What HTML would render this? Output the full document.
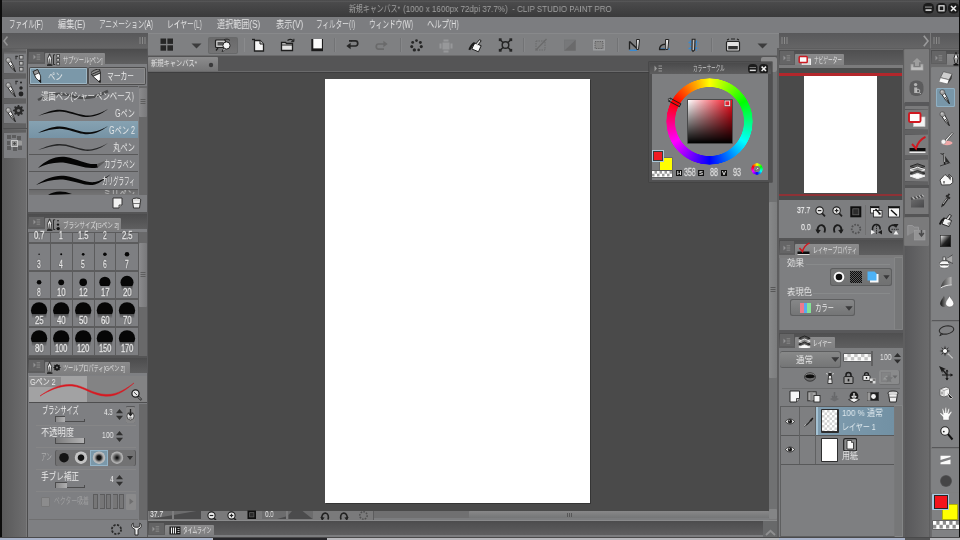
<!DOCTYPE html>
<html lang="ja"><head><meta charset="utf-8"><title>CLIP STUDIO PAINT PRO</title>
<style>
html,body{margin:0;padding:0;background:#4a4a4a;overflow:hidden}
#app{position:relative;width:960px;height:540px;overflow:hidden;background:#4a4a4a;font-family:"Liberation Sans","Noto Sans CJK JP",sans-serif}
#app div,#app svg,#app span.t{position:absolute;display:block}
#app span.t{white-space:nowrap;transform-origin:0 0}
#app span.t{opacity:.92;will-change:transform}
</style></head><body><div id="app">
<div style="left:0px;top:0px;width:960px;height:17px;background:linear-gradient(to bottom,#4d4d4e,#3a3a3b);"></div>
<div style="left:0px;top:1px;width:960px;height:1px;background:#555556;"></div>
<span class="t" style="left:349px;top:3px;font-size:9.5px;line-height:11.5px;color:#a9a9a9;transform:scaleX(0.729);">新規キャンバス*</span>
<span class="t" style="left:403px;top:3px;font-size:9.5px;line-height:11.5px;color:#a9a9a9;transform:scaleX(0.843);">(1000 x 1600px 72dpi 37.7%)&nbsp; - CLIP STUDIO PAINT PRO</span>
<svg style="left:923px;top:3px;" width="11" height="11" viewBox="0 0 11 11"><rect x="0" y="0" width="11" height="10.5" rx="4.5" fill="#1c1c1c"/><rect x="2.5" y="6.3" width="6" height="1.6" fill="#ddd"/><rect x="2" y="3.5" width="7" height="1.2" fill="#888"/></svg>
<svg style="left:936px;top:3px;" width="11" height="11" viewBox="0 0 11 11"><rect x="0" y="0" width="11" height="10.5" rx="4.5" fill="#1c1c1c"/><rect x="3" y="2.8" width="5" height="5" fill="none" stroke="#ddd" stroke-width="1.3"/></svg>
<svg style="left:948px;top:3px;" width="11" height="11" viewBox="0 0 11 11"><rect x="0" y="0" width="11" height="10.5" rx="4.5" fill="#1c1c1c"/><path d="M3 3L8 8M8 3L3 8" stroke="#eee" stroke-width="1.5"/></svg>
<div style="left:0px;top:17px;width:960px;height:16px;background:#7c7d80;"></div>
<span class="t" style="left:9px;top:19px;font-size:10px;line-height:12px;color:#ececec;transform:scaleX(0.642);">ファイル(F)</span>
<span class="t" style="left:58px;top:19px;font-size:10px;line-height:12px;color:#ececec;transform:scaleX(0.818);">編集(E)</span>
<span class="t" style="left:99px;top:19px;font-size:10px;line-height:12px;color:#ececec;transform:scaleX(0.651);">アニメーション(A)</span>
<span class="t" style="left:167px;top:19px;font-size:10px;line-height:12px;color:#ececec;transform:scaleX(0.673);">レイヤー(L)</span>
<span class="t" style="left:217px;top:19px;font-size:10px;line-height:12px;color:#ececec;transform:scaleX(0.811);">選択範囲(S)</span>
<span class="t" style="left:276px;top:19px;font-size:10px;line-height:12px;color:#ececec;transform:scaleX(0.818);">表示(V)</span>
<span class="t" style="left:316px;top:19px;font-size:10px;line-height:12px;color:#ececec;transform:scaleX(0.661);">フィルター(I)</span>
<span class="t" style="left:369px;top:19px;font-size:10px;line-height:12px;color:#ececec;transform:scaleX(0.667);">ウィンドウ(W)</span>
<span class="t" style="left:427px;top:19px;font-size:10px;line-height:12px;color:#ececec;transform:scaleX(0.727);">ヘルプ(H)</span>
<div style="left:0px;top:33px;width:148px;height:15px;background:linear-gradient(to bottom,#58585a,#656566);"></div>
<svg style="left:3px;top:36px;" width="5" height="10" viewBox="0 0 5 10"><path d="M4.5 0.5L1 5L4.5 9.5" fill="none" stroke="#929293" stroke-width="1.6"/></svg>
<svg style="left:139px;top:37px;" width="7" height="7" viewBox="0 0 7 7"><path d="M1 0V7M3.5 0V7M6 0V7" stroke="#8a8a8a" stroke-width="1"/></svg>
<div style="left:777px;top:33px;width:183px;height:15px;background:linear-gradient(to bottom,#58585a,#656566);"></div>
<div style="left:0px;top:48px;width:148px;height:492px;background:#5e5e5f;"></div>
<div style="left:1.5px;top:49px;width:24.5px;height:488px;background:linear-gradient(to right,#59595a,#6d6d6e);"></div>
<div style="left:26px;top:49px;width:1.3px;height:488px;background:#7a7a7b;"></div>
<div style="left:27.3px;top:49px;width:1.2px;height:488px;background:#4c4c4d;"></div>
<div style="left:28px;top:49px;width:120px;height:488px;background:#6c6c6d;"></div>
<div style="left:4px;top:51px;width:21.5px;height:2.5px;background:linear-gradient(to bottom,#58585a,#747475);"></div>
<div style="left:4px;top:54px;width:22px;height:19px;background:#7e7f82;"></div>
<svg style="left:5.3px;top:57px;" width="12" height="16" viewBox="0 0 12 16"><path d="M2.6 5.2L5.6 3.6L8.6 9.4L10.4 14.8L6.6 11Z" fill="#f6f6f6" stroke="#1c1c1c" stroke-width="0.9" stroke-linejoin="round"/><path d="M6.4 8L10 14.2" stroke="#1c1c1c" stroke-width="0.9"/><circle cx="3.4" cy="3.2" r="2.5" fill="#a2a2a2" stroke="#4a4a4a" stroke-width="0.7"/><circle cx="2.8" cy="2.6" r="1" fill="#c8c8c8"/></svg>
<svg style="left:15px;top:55px;" width="9" height="17" viewBox="0 0 9 17"><rect x="0.5" y="0.8" width="1" height="3.6" fill="#2a2a2a"/><rect x="0.5" y="0.8" width="2.6" height="1" fill="#2a2a2a"/><rect x="4.5" y="0.5" width="3.5" height="3.5" fill="#bbb" stroke="#444" stroke-width="0.8"/><rect x="4.5" y="6.5" width="3.5" height="3.5" fill="#bbb" stroke="#444" stroke-width="0.8"/><rect x="4.5" y="12.5" width="3.5" height="3.5" fill="#bbb" stroke="#444" stroke-width="0.8"/></svg>
<div style="left:4px;top:74px;width:22px;height:4px;background:#616162;"></div>
<div style="left:4px;top:79px;width:22px;height:19px;background:#7e7f82;"></div>
<svg style="left:5.3px;top:82px;" width="12" height="16" viewBox="0 0 12 16"><path d="M2.6 5.2L5.6 3.6L8.6 9.4L10.4 14.8L6.6 11Z" fill="#f6f6f6" stroke="#1c1c1c" stroke-width="0.9" stroke-linejoin="round"/><path d="M6.4 8L10 14.2" stroke="#1c1c1c" stroke-width="0.9"/><circle cx="3.4" cy="3.2" r="2.5" fill="#a2a2a2" stroke="#4a4a4a" stroke-width="0.7"/><circle cx="2.8" cy="2.6" r="1" fill="#c8c8c8"/></svg>
<svg style="left:15px;top:80px;" width="9" height="17" viewBox="0 0 9 17"><rect x="0.5" y="0.8" width="1" height="3.6" fill="#2a2a2a"/><rect x="0.5" y="0.8" width="2.6" height="1" fill="#2a2a2a"/><circle cx="6" cy="2.5" r="1" fill="#222"/><circle cx="6" cy="8" r="1.7" fill="#222"/><circle cx="6" cy="14" r="2.4" fill="#222"/></svg>
<div style="left:4px;top:99px;width:22px;height:4px;background:#616162;"></div>
<div style="left:4px;top:104px;width:22px;height:19px;background:#7e7f82;"></div>
<svg style="left:5.3px;top:107px;" width="12" height="16" viewBox="0 0 12 16"><path d="M2.6 5.2L5.6 3.6L8.6 9.4L10.4 14.8L6.6 11Z" fill="#f6f6f6" stroke="#1c1c1c" stroke-width="0.9" stroke-linejoin="round"/><path d="M6.4 8L10 14.2" stroke="#1c1c1c" stroke-width="0.9"/><circle cx="3.4" cy="3.2" r="2.5" fill="#a2a2a2" stroke="#4a4a4a" stroke-width="0.7"/><circle cx="2.8" cy="2.6" r="1" fill="#c8c8c8"/></svg>
<svg style="left:13px;top:105px;" width="11" height="11" viewBox="0 0 11 11"><circle cx="5.5" cy="5.5" r="3" fill="none" stroke="#2a2a2a" stroke-width="2.4"/><path d="M5.5 0V11M0 5.5H11M1.6 1.6L9.4 9.4M9.4 1.6L1.6 9.4" stroke="#2a2a2a" stroke-width="1.6"/><circle cx="5.5" cy="5.5" r="1.6" fill="#7b7b7c"/></svg>
<div style="left:4px;top:124px;width:22px;height:4px;background:#616162;"></div>
<div style="left:3px;top:128px;width:24px;height:1px;background:#505051;"></div>
<div style="left:4px;top:130px;width:22px;height:2px;background:#5f5f60;"></div>
<div style="left:4px;top:133px;width:22px;height:24.7px;background:#7e7f82;"></div>
<svg style="left:7px;top:135px;" width="16" height="16" viewBox="0 0 16 16"><g fill="#5c5c5d"><rect x="0" y="0" width="4" height="4"/><rect x="5" y="0" width="4" height="3"/><rect x="10" y="1" width="4" height="4"/><rect x="0" y="6" width="3" height="4"/><rect x="0" y="11" width="4" height="4"/><rect x="6" y="12" width="4" height="4"/><rect x="11" y="11" width="4" height="4"/></g><rect x="11" y="6" width="4" height="4" fill="#9a9a9a"/><rect x="4.5" y="5.5" width="6" height="6" fill="#8a8a8a" stroke="#c8c8c8" stroke-width="1"/><path d="M7.5 7V10M6 8.5H9" stroke="#444" stroke-width="0.8"/></svg>
<div style="left:28px;top:64px;width:120px;height:131px;background:#7e7f82;"></div>
<div style="left:28px;top:49px;width:120px;height:15px;background:linear-gradient(to bottom,#4c4c4d,#5f5f60);"></div>
<div style="left:28.5px;top:51.5px;width:15px;height:10.5px;background:#646465;"></div>
<svg style="left:32.5px;top:53.5px;" width="8" height="7" viewBox="0 0 8 7"><path d="M0.5 0.5L2.8 3L0.5 5.5Z" fill="#949495"/><path d="M3.6 0.8H7.2M3.6 3H7.2M3.6 5.2H7.2" stroke="#8e8e8f" stroke-width="0.9"/></svg>
<div style="left:44.5px;top:53px;width:60.5px;height:13px;background:linear-gradient(to bottom,#8a8a8b,#7d7d7e);border-radius:1px 1px 0 0"></div>
<svg style="left:47px;top:52.8px;" width="6" height="13" viewBox="0 0 6 13"><path d="M2.6 0.8L4.6 5.5L3.8 11.4H1.4L0.6 5.5Z" fill="#f2f2f2" stroke="#1c1c1c" stroke-width="0.8"/><path d="M2.6 5.5V11" stroke="#1c1c1c" stroke-width="0.7"/><path d="M1.6 2.6H3.6" stroke="#555" stroke-width="0.7"/><rect x="0" y="11.5" width="5.4" height="1.2" fill="#0c0c0c"/></svg>
<svg style="left:53px;top:53.5px;" width="8" height="12" viewBox="0 0 8 12"><path d="M0.5 10.5V0.8H2.2M0.5 10.5H2.2" stroke="#262626" stroke-width="0.9" fill="none"/><g fill="#c8c8c8" stroke="#303030" stroke-width="0.7"><rect x="3.8" y="0.6" width="2.6" height="2.6"/><rect x="3.8" y="4.5" width="2.6" height="2.6"/><rect x="3.8" y="8.4" width="2.6" height="2.6"/></g></svg>
<span class="t" style="left:62.5px;top:55.5px;font-size:7.5px;line-height:9.5px;color:#e6e6e6;transform:scaleX(0.702);">サブツール[ペン]</span>
<div style="left:28.5px;top:67px;width:59px;height:18px;background:#4e4e4f;border-radius:2px"></div>
<div style="left:29.5px;top:68px;width:57px;height:16px;background:#7b98a9;box-shadow:inset 0 0 0 1px #9db6c4;border-radius:1px"></div>
<div style="left:87.5px;top:67px;width:58.5px;height:18px;background:#4e4e4f;border-radius:2px"></div>
<div style="left:88.5px;top:68px;width:56.5px;height:16px;background:#7e7f82;box-shadow:inset 0 0 0 1px #8c8c8d;border-radius:1px"></div>
<svg style="left:32px;top:69px;" width="12" height="15" viewBox="0 0 12 15"><g transform="rotate(-24 6 7.5)"><path d="M3.6 1H8.4L8.6 8L6 14L3.4 8Z" fill="#fbfbfb" stroke="#222" stroke-width="0.8"/><path d="M3.6 1H8.4L8.5 4.6H3.5Z" fill="#9a9a9a" stroke="#222" stroke-width="0.7"/><path d="M5.2 11.6L6 14L6.8 11.6Z" fill="#111" stroke="#111" stroke-width="0.8"/></g></svg>
<svg style="left:90.5px;top:69px;" width="13" height="15" viewBox="0 0 13 15"><g transform="rotate(-24 6.5 7.5)"><path d="M1.6 1.5C4 0.2 9 0.2 11.4 1.5L10.6 5.5H2.4Z" fill="#8a8a8a" stroke="#222" stroke-width="0.8"/><path d="M2 3.2H11" stroke="#222" stroke-width="0.8"/><path d="M2.4 5.5H10.6L7.4 12.6H5.6Z" fill="#fbfbfb" stroke="#222" stroke-width="0.8"/><path d="M5.6 12.4H7.4L6.5 14.2Z" fill="#111" stroke="#111" stroke-width="0.7"/></g></svg>
<span class="t" style="left:48px;top:70.5px;font-size:10px;line-height:12px;color:#efefef;transform:scaleX(0.725);">ペン</span>
<span class="t" style="left:107px;top:70.5px;font-size:10px;line-height:12px;color:#efefef;transform:scaleX(0.675);">マーカー</span>
<div style="left:28.5px;top:86px;width:109.5px;height:109px;background:#585859;"></div>
<div style="left:29px;top:87px;width:108.5px;height:16.5px;background:#7e7f82;"></div>
<div style="left:29px;top:104px;width:108.5px;height:16.5px;background:#7e7f82;"></div>
<div style="left:29px;top:121px;width:108.5px;height:16.5px;background:linear-gradient(to bottom,#86a2b2,#7693a5);"></div>
<div style="left:29px;top:138px;width:108.5px;height:16px;background:#7e7f82;"></div>
<div style="left:29px;top:155px;width:108.5px;height:16px;background:#7e7f82;"></div>
<div style="left:29px;top:172px;width:108.5px;height:16.5px;background:#7e7f82;"></div>
<div style="left:29px;top:189.5px;width:108.5px;height:5.5px;background:linear-gradient(to bottom,#6a6a6b,#747475);"></div>
<svg style="left:28px;top:86px;" width="110" height="110" viewBox="0 0 110 110"><g transform="translate(-28,-86)"><path d="M38 100 C50 93 62 93 72 96 C84 100 95 98 108 91" stroke="#2a2a2a" stroke-width="2.6" fill="none" opacity="0.6"/><path d="M38 116 C48 111.4 56 108.4 66 110.4 C78 113.4 84 116.4 92 115.14 C99 114 104 111 108 109 C104 112 99 115.36 92 116.56 C84 118.19999999999999 78 115.1 66 112.19999999999999 C56 110.19999999999999 48 113.19999999999999 38 116Z" fill="#0a0a0a"/><path d="M38 133 C48 128.2 56 125.2 66 127.2 C78 130.2 84 133.2 92 132.02 C99 131 104 128 108 126 C104 129 99 132.48 92 133.67999999999998 C84 135.4 78 132.3 66 129.4 C56 127.39999999999999 48 130.4 38 133Z" fill="#0a0a0a"/><g opacity="0.75"><path d="M38 150 C48 145.55 56 142.55 66 144.55 C78 147.55 84 150.55 92 149.23 C99 148 104 145 108 143 C104 146 99 149.27 92 150.47 C84 152.04999999999998 78 148.95 66 146.04999999999998 C56 144.04999999999998 48 147.04999999999998 38 150Z" fill="#0a0a0a"/></g><path d="M38 168 C46 160 56 155.5 66 157 C78 159 86 165 97 164 L98 167.5 C86 169.5 78 165 66 163 C56 161.5 46 164 38 168Z" fill="#050505"/><path d="M97 164 L107 160 L98 167.5Z" fill="#5a5a5b"/><path d="M36 185 C46 178 56 174.5 66 176 C78 178 86 183 95 182 C100 181 105 178 111 174 C105 179 100 183 95 184.5 C86 186.5 78 182 66 180 C56 178.5 46 181 36 185Z" fill="#050505"/><path d="M48 195 C54 191 62 190 72 194Z" fill="#050505"/></g></svg>
<span class="t" style="left:41px;top:90.5px;font-size:10px;line-height:12px;color:#efefef;transform:scaleX(0.738);">漫画ペン(シャーペンベース)</span>
<span class="t" style="left:115px;top:107.5px;font-size:10px;line-height:12px;color:#efefef;transform:scaleX(0.714);">Gペン</span>
<span class="t" style="left:109px;top:124.5px;font-size:10px;line-height:12px;color:#efefef;transform:scaleX(0.722);">Gペン 2</span>
<span class="t" style="left:113px;top:141.5px;font-size:10px;line-height:12px;color:#efefef;transform:scaleX(0.733);">丸ペン</span>
<span class="t" style="left:104px;top:158.5px;font-size:10px;line-height:12px;color:#efefef;transform:scaleX(0.620);">カブラペン</span>
<span class="t" style="left:102px;top:175.5px;font-size:10px;line-height:12px;color:#efefef;transform:scaleX(0.550);">カリグラフィ</span>
<span class="t" style="left:103px;top:189px;font-size:9px;line-height:11px;color:#d0d0d0;transform:scaleX(0.889);clip-path:inset(0 0 6px 0)">ミリペン</span>
<div style="left:138.5px;top:86px;width:8.5px;height:109px;background:#69696a;"></div>
<div style="left:139px;top:87.5px;width:7.5px;height:29.5px;background:linear-gradient(to right,#8b8b8d,#79797b);border-radius:1px"></div>
<svg style="left:140px;top:99px;" width="6" height="6" viewBox="0 0 6 6"><path d="M0.5 0.5H5.5M0.5 2.5H5.5M0.5 4.5H5.5" stroke="#555" stroke-width="0.8"/></svg>
<div style="left:28px;top:195px;width:120px;height:17px;background:#7e7f82;"></div>
<svg style="left:112px;top:197px;" width="11" height="12" viewBox="0 0 11 12"><path d="M1 1H10V8L7 11H1Z" fill="#f2f2f2" stroke="#333" stroke-width="1"/><path d="M10 8H7V11" fill="#bbb" stroke="#333" stroke-width="0.8"/></svg>
<svg style="left:131px;top:197px;" width="11" height="12" viewBox="0 0 11 12"><ellipse cx="5.5" cy="3" rx="4.5" ry="2" fill="#ddd" stroke="#333" stroke-width="1"/><path d="M1.5 4L2.5 11H8.5L9.5 4" fill="#eee" stroke="#333" stroke-width="1"/><path d="M2 6.5H9" stroke="#555" stroke-width="0.8"/></svg>
<div style="left:28px;top:212px;width:120px;height:2px;background:#555556;"></div>
<div style="left:28px;top:229px;width:120px;height:127px;background:#7e7f82;"></div>
<div style="left:28px;top:214px;width:120px;height:15px;background:linear-gradient(to bottom,#4c4c4d,#5f5f60);"></div>
<div style="left:28.5px;top:216.5px;width:15px;height:10.5px;background:#646465;"></div>
<svg style="left:32.5px;top:218.5px;" width="8" height="7" viewBox="0 0 8 7"><path d="M0.5 0.5L2.8 3L0.5 5.5Z" fill="#949495"/><path d="M3.6 0.8H7.2M3.6 3H7.2M3.6 5.2H7.2" stroke="#8e8e8f" stroke-width="0.9"/></svg>
<div style="left:44.5px;top:218px;width:76px;height:13px;background:linear-gradient(to bottom,#8a8a8b,#7d7d7e);border-radius:1px 1px 0 0"></div>
<svg style="left:47px;top:217.8px;" width="6" height="13" viewBox="0 0 6 13"><path d="M2.6 0.8L4.6 5.5L3.8 11.4H1.4L0.6 5.5Z" fill="#f2f2f2" stroke="#1c1c1c" stroke-width="0.8"/><path d="M2.6 5.5V11" stroke="#1c1c1c" stroke-width="0.7"/><path d="M1.6 2.6H3.6" stroke="#555" stroke-width="0.7"/><rect x="0" y="11.5" width="5.4" height="1.2" fill="#0c0c0c"/></svg>
<svg style="left:53px;top:218.5px;" width="8" height="12" viewBox="0 0 8 12"><path d="M0.5 10.5V0.8H2.2M0.5 10.5H2.2" stroke="#262626" stroke-width="0.9" fill="none"/><circle cx="5" cy="1.8" r="0.8" fill="#151515"/><circle cx="5" cy="5.6" r="1.2" fill="#151515"/><circle cx="5.2" cy="9.6" r="1.7" fill="#151515"/></svg>
<span class="t" style="left:62.5px;top:220.5px;font-size:7.5px;line-height:9.5px;color:#e6e6e6;transform:scaleX(0.737);">ブラシサイズ[Gペン 2]</span>
<div style="left:28px;top:232px;width:110.5px;height:123.5px;background:#5c5c5d;"></div>
<div style="left:28.5px;top:232.5px;width:21.3px;height:9.5px;background:#7e7f82;"></div>
<div style="left:50.8px;top:232.5px;width:20.9px;height:9.5px;background:#7e7f82;"></div>
<div style="left:72.7px;top:232.5px;width:20.9px;height:9.5px;background:#7e7f82;"></div>
<div style="left:94.6px;top:232.5px;width:20.7px;height:9.5px;background:#7e7f82;"></div>
<div style="left:116.3px;top:232.5px;width:21.4px;height:9.5px;background:#7e7f82;"></div>
<div style="left:28.5px;top:244px;width:21.3px;height:26px;background:#7e7f82;"></div>
<div style="left:50.8px;top:244px;width:20.9px;height:26px;background:#7e7f82;"></div>
<div style="left:72.7px;top:244px;width:20.9px;height:26px;background:#7e7f82;"></div>
<div style="left:94.6px;top:244px;width:20.7px;height:26px;background:#7e7f82;"></div>
<div style="left:116.3px;top:244px;width:21.4px;height:26px;background:#7e7f82;"></div>
<div style="left:28.5px;top:272px;width:21.3px;height:26px;background:#7e7f82;"></div>
<div style="left:50.8px;top:272px;width:20.9px;height:26px;background:#7e7f82;"></div>
<div style="left:72.7px;top:272px;width:20.9px;height:26px;background:#7e7f82;"></div>
<div style="left:94.6px;top:272px;width:20.7px;height:26px;background:#7e7f82;"></div>
<div style="left:116.3px;top:272px;width:21.4px;height:26px;background:#7e7f82;"></div>
<div style="left:28.5px;top:300px;width:21.3px;height:26px;background:#7e7f82;"></div>
<div style="left:50.8px;top:300px;width:20.9px;height:26px;background:#7e7f82;"></div>
<div style="left:72.7px;top:300px;width:20.9px;height:26px;background:#7e7f82;"></div>
<div style="left:94.6px;top:300px;width:20.7px;height:26px;background:#7e7f82;"></div>
<div style="left:116.3px;top:300px;width:21.4px;height:26px;background:#7e7f82;"></div>
<div style="left:28.5px;top:328px;width:21.3px;height:26.5px;background:#7e7f82;"></div>
<div style="left:50.8px;top:328px;width:20.9px;height:26.5px;background:#7e7f82;"></div>
<div style="left:72.7px;top:328px;width:20.9px;height:26.5px;background:#7e7f82;"></div>
<div style="left:94.6px;top:328px;width:20.7px;height:26.5px;background:#7e7f82;"></div>
<div style="left:116.3px;top:328px;width:21.4px;height:26.5px;background:#7e7f82;"></div>
<svg style="left:28px;top:232px;" width="110" height="124" viewBox="0 0 110 124"><defs><clipPath id="bc0"><rect x="28" y="232.5" width="110" height="13.9"/></clipPath><clipPath id="bc1"><rect x="28" y="244" width="110" height="13.9"/></clipPath><clipPath id="bc2"><rect x="28" y="272" width="110" height="13.9"/></clipPath><clipPath id="bc3"><rect x="28" y="300" width="110" height="13.9"/></clipPath><clipPath id="bc4"><rect x="28" y="328" width="110" height="13.9"/></clipPath><linearGradient id="bsh" x1="0" y1="0" x2="0" y2="1"><stop offset="0" stop-color="#000" stop-opacity="0.42"/><stop offset="1" stop-color="#000" stop-opacity="0"/></linearGradient></defs><g transform="translate(-28,-232)"><circle cx="39.1" cy="254.3" r="0.7" fill="#060606" clip-path="url(#bc1)"/><circle cx="61.2" cy="254.3" r="1.0" fill="#060606" clip-path="url(#bc1)"/><circle cx="83.2" cy="254.3" r="1.35" fill="#060606" clip-path="url(#bc1)"/><circle cx="104.9" cy="254.3" r="1.8" fill="#060606" clip-path="url(#bc1)"/><circle cx="127.0" cy="254.3" r="2.25" fill="#060606" clip-path="url(#bc1)"/><circle cx="39.1" cy="282.3" r="2.3" fill="#060606" clip-path="url(#bc2)"/><circle cx="61.2" cy="282.3" r="2.9" fill="#060606" clip-path="url(#bc2)"/><circle cx="83.2" cy="282.3" r="3.8" fill="#060606" clip-path="url(#bc2)"/><circle cx="104.9" cy="282.3" r="5.6" fill="#060606" clip-path="url(#bc2)"/><circle cx="127.0" cy="282.3" r="6.5" fill="#060606" clip-path="url(#bc2)"/><rect x="121.5" y="285.9" width="11.0" height="4.5" fill="url(#bsh)"/><circle cx="39.1" cy="310.3" r="8.1" fill="#060606" clip-path="url(#bc3)"/><rect x="31.8" y="313.9" width="14.6" height="4.5" fill="url(#bsh)"/><circle cx="61.2" cy="310.3" r="8.1" fill="#060606" clip-path="url(#bc3)"/><rect x="53.9" y="313.9" width="14.6" height="4.5" fill="url(#bsh)"/><circle cx="83.2" cy="310.3" r="8.1" fill="#060606" clip-path="url(#bc3)"/><rect x="75.8" y="313.9" width="14.6" height="4.5" fill="url(#bsh)"/><circle cx="104.9" cy="310.3" r="8.1" fill="#060606" clip-path="url(#bc3)"/><rect x="97.6" y="313.9" width="14.6" height="4.5" fill="url(#bsh)"/><circle cx="127.0" cy="310.3" r="8.1" fill="#060606" clip-path="url(#bc3)"/><rect x="119.7" y="313.9" width="14.6" height="4.5" fill="url(#bsh)"/><circle cx="39.1" cy="338.3" r="8.1" fill="#060606" clip-path="url(#bc4)"/><rect x="31.8" y="341.9" width="14.6" height="4.5" fill="url(#bsh)"/><circle cx="61.2" cy="338.3" r="8.1" fill="#060606" clip-path="url(#bc4)"/><rect x="53.9" y="341.9" width="14.6" height="4.5" fill="url(#bsh)"/><circle cx="83.2" cy="338.3" r="8.1" fill="#060606" clip-path="url(#bc4)"/><rect x="75.8" y="341.9" width="14.6" height="4.5" fill="url(#bsh)"/><circle cx="104.9" cy="338.3" r="8.1" fill="#060606" clip-path="url(#bc4)"/><rect x="97.6" y="341.9" width="14.6" height="4.5" fill="url(#bsh)"/><circle cx="127.0" cy="338.3" r="8.1" fill="#060606" clip-path="url(#bc4)"/><rect x="119.7" y="341.9" width="14.6" height="4.5" fill="url(#bsh)"/></g></svg>
<span class="t" style="left:33.9px;top:229.5px;font-size:10px;line-height:12px;color:#f6f6f6;transform:scaleX(0.750);-webkit-text-stroke:0.35px #f0f0f0;text-shadow:0 0 1px #333,0 0 2px #444">0.7</span>
<span class="t" style="left:59.25px;top:229.5px;font-size:10px;line-height:12px;color:#f6f6f6;transform:scaleX(0.667);-webkit-text-stroke:0.35px #f0f0f0;text-shadow:0 0 1px #333,0 0 2px #444">1</span>
<span class="t" style="left:77.9px;top:229.5px;font-size:10px;line-height:12px;color:#f6f6f6;transform:scaleX(0.750);-webkit-text-stroke:0.35px #f0f0f0;text-shadow:0 0 1px #333,0 0 2px #444">1.5</span>
<span class="t" style="left:102.94999999999999px;top:229.5px;font-size:10px;line-height:12px;color:#f6f6f6;transform:scaleX(0.667);-webkit-text-stroke:0.35px #f0f0f0;text-shadow:0 0 1px #333,0 0 2px #444">2</span>
<span class="t" style="left:121.75px;top:229.5px;font-size:10px;line-height:12px;color:#f6f6f6;transform:scaleX(0.750);-webkit-text-stroke:0.35px #f0f0f0;text-shadow:0 0 1px #333,0 0 2px #444">2.5</span>
<span class="t" style="left:37.15px;top:259px;font-size:10px;line-height:12px;color:#f6f6f6;transform:scaleX(0.667);-webkit-text-stroke:0.35px #f0f0f0;text-shadow:0 0 1px #333,0 0 2px #444">3</span>
<span class="t" style="left:59.25px;top:259px;font-size:10px;line-height:12px;color:#f6f6f6;transform:scaleX(0.667);-webkit-text-stroke:0.35px #f0f0f0;text-shadow:0 0 1px #333,0 0 2px #444">4</span>
<span class="t" style="left:81.15px;top:259px;font-size:10px;line-height:12px;color:#f6f6f6;transform:scaleX(0.667);-webkit-text-stroke:0.35px #f0f0f0;text-shadow:0 0 1px #333,0 0 2px #444">5</span>
<span class="t" style="left:102.94999999999999px;top:259px;font-size:10px;line-height:12px;color:#f6f6f6;transform:scaleX(0.667);-webkit-text-stroke:0.35px #f0f0f0;text-shadow:0 0 1px #333,0 0 2px #444">6</span>
<span class="t" style="left:125.0px;top:259px;font-size:10px;line-height:12px;color:#f6f6f6;transform:scaleX(0.667);-webkit-text-stroke:0.35px #f0f0f0;text-shadow:0 0 1px #333,0 0 2px #444">7</span>
<span class="t" style="left:37.15px;top:287px;font-size:10px;line-height:12px;color:#f6f6f6;transform:scaleX(0.667);-webkit-text-stroke:0.35px #f0f0f0;text-shadow:0 0 1px #333,0 0 2px #444">8</span>
<span class="t" style="left:57.0px;top:287px;font-size:10px;line-height:12px;color:#f6f6f6;transform:scaleX(0.773);-webkit-text-stroke:0.35px #f0f0f0;text-shadow:0 0 1px #333,0 0 2px #444">10</span>
<span class="t" style="left:78.9px;top:287px;font-size:10px;line-height:12px;color:#f6f6f6;transform:scaleX(0.773);-webkit-text-stroke:0.35px #f0f0f0;text-shadow:0 0 1px #333,0 0 2px #444">12</span>
<span class="t" style="left:100.69999999999999px;top:287px;font-size:10px;line-height:12px;color:#f6f6f6;transform:scaleX(0.773);-webkit-text-stroke:0.35px #f0f0f0;text-shadow:0 0 1px #333,0 0 2px #444">17</span>
<span class="t" style="left:122.75px;top:287px;font-size:10px;line-height:12px;color:#f6f6f6;transform:scaleX(0.773);-webkit-text-stroke:0.35px #f0f0f0;text-shadow:0 0 1px #333,0 0 2px #444">20</span>
<span class="t" style="left:34.9px;top:315px;font-size:10px;line-height:12px;color:#f6f6f6;transform:scaleX(0.773);-webkit-text-stroke:0.35px #f0f0f0;text-shadow:0 0 1px #333,0 0 2px #444">25</span>
<span class="t" style="left:57.0px;top:315px;font-size:10px;line-height:12px;color:#f6f6f6;transform:scaleX(0.773);-webkit-text-stroke:0.35px #f0f0f0;text-shadow:0 0 1px #333,0 0 2px #444">40</span>
<span class="t" style="left:78.9px;top:315px;font-size:10px;line-height:12px;color:#f6f6f6;transform:scaleX(0.773);-webkit-text-stroke:0.35px #f0f0f0;text-shadow:0 0 1px #333,0 0 2px #444">50</span>
<span class="t" style="left:100.69999999999999px;top:315px;font-size:10px;line-height:12px;color:#f6f6f6;transform:scaleX(0.773);-webkit-text-stroke:0.35px #f0f0f0;text-shadow:0 0 1px #333,0 0 2px #444">60</span>
<span class="t" style="left:122.75px;top:315px;font-size:10px;line-height:12px;color:#f6f6f6;transform:scaleX(0.773);-webkit-text-stroke:0.35px #f0f0f0;text-shadow:0 0 1px #333,0 0 2px #444">70</span>
<span class="t" style="left:34.9px;top:343px;font-size:10px;line-height:12px;color:#f6f6f6;transform:scaleX(0.773);-webkit-text-stroke:0.35px #f0f0f0;text-shadow:0 0 1px #333,0 0 2px #444">80</span>
<span class="t" style="left:55.0px;top:343px;font-size:10px;line-height:12px;color:#f6f6f6;transform:scaleX(0.735);-webkit-text-stroke:0.35px #f0f0f0;text-shadow:0 0 1px #333,0 0 2px #444">100</span>
<span class="t" style="left:76.9px;top:343px;font-size:10px;line-height:12px;color:#f6f6f6;transform:scaleX(0.735);-webkit-text-stroke:0.35px #f0f0f0;text-shadow:0 0 1px #333,0 0 2px #444">120</span>
<span class="t" style="left:98.69999999999999px;top:343px;font-size:10px;line-height:12px;color:#f6f6f6;transform:scaleX(0.735);-webkit-text-stroke:0.35px #f0f0f0;text-shadow:0 0 1px #333,0 0 2px #444">150</span>
<span class="t" style="left:120.75px;top:343px;font-size:10px;line-height:12px;color:#f6f6f6;transform:scaleX(0.735);-webkit-text-stroke:0.35px #f0f0f0;text-shadow:0 0 1px #333,0 0 2px #444">170</span>
<div style="left:138.5px;top:232px;width:8.5px;height:124px;background:#69696a;"></div>
<div style="left:139px;top:243px;width:7.5px;height:64.3px;background:linear-gradient(to right,#8b8b8d,#79797b);border-radius:1px"></div>
<svg style="left:140px;top:272px;" width="6" height="6" viewBox="0 0 6 6"><path d="M0.5 0.5H5.5M0.5 2.5H5.5M0.5 4.5H5.5" stroke="#555" stroke-width="0.8"/></svg>
<div style="left:28px;top:355.5px;width:120px;height:2px;background:#555556;"></div>
<div style="left:28px;top:372.5px;width:120px;height:148px;background:#7e7f82;"></div>
<div style="left:28px;top:357.5px;width:120px;height:15px;background:linear-gradient(to bottom,#4c4c4d,#5f5f60);"></div>
<div style="left:28.5px;top:360.0px;width:15px;height:10.5px;background:#646465;"></div>
<svg style="left:32.5px;top:362.0px;" width="8" height="7" viewBox="0 0 8 7"><path d="M0.5 0.5L2.8 3L0.5 5.5Z" fill="#949495"/><path d="M3.6 0.8H7.2M3.6 3H7.2M3.6 5.2H7.2" stroke="#8e8e8f" stroke-width="0.9"/></svg>
<div style="left:44.5px;top:361.5px;width:85px;height:13px;background:linear-gradient(to bottom,#8a8a8b,#7d7d7e);border-radius:1px 1px 0 0"></div>
<svg style="left:47px;top:361.3px;" width="6" height="13" viewBox="0 0 6 13"><path d="M2.6 0.8L4.6 5.5L3.8 11.4H1.4L0.6 5.5Z" fill="#f2f2f2" stroke="#1c1c1c" stroke-width="0.8"/><path d="M2.6 5.5V11" stroke="#1c1c1c" stroke-width="0.7"/><path d="M1.6 2.6H3.6" stroke="#555" stroke-width="0.7"/><rect x="0" y="11.5" width="5.4" height="1.2" fill="#0c0c0c"/></svg>
<svg style="left:53px;top:362.0px;" width="8" height="12" viewBox="0 0 8 12"><circle cx="4" cy="5.5" r="2" fill="none" stroke="#151515" stroke-width="1.7"/><path d="M4 2V9M0.5 5.5H7.5M1.5 3L6.5 8M6.5 3L1.5 8" stroke="#151515" stroke-width="1.1"/><circle cx="4" cy="5.5" r="1" fill="#858586"/></svg>
<span class="t" style="left:63px;top:364.0px;font-size:7.5px;line-height:9.5px;color:#e6e6e6;transform:scaleX(0.681);">ツールプロパティ[Gペン 2]</span>
<div style="left:28.5px;top:375.5px;width:119px;height:27.5px;background:#4e4e4f;"></div>
<div style="left:29px;top:376px;width:58px;height:26px;background:#a2a2a3;"></div>
<div style="left:87px;top:376px;width:60.5px;height:26px;background:#838384;"></div>
<div style="left:29px;top:376.5px;width:32px;height:10.5px;background:#8b8b8c;"></div>
<span class="t" style="left:30px;top:377px;font-size:9px;line-height:11px;color:#f4f4f4;transform:scaleX(0.788);">Gペン 2</span>
<svg style="left:29px;top:376px;" width="118" height="26" viewBox="0 0 118 26"><g transform="translate(-29,-376)"><path d="M40 396 C48 390 60 383.5 72 384.5 C84 385.5 92 394 106 394.5 C118 395 127 388 134 383 C127 389 118 396.6 106 396.2 C92 395.6 84 387 72 386 C60 385 48 391 40 396Z" fill="#d81820" stroke="#d81820" stroke-width="0.5"/><circle cx="135.5" cy="393.5" r="3.6" fill="#e8e8e8" stroke="#222" stroke-width="1.3"/><path d="M138 396.5L141.5 400" stroke="#222" stroke-width="2.2"/><path d="M138.5 397L141 399.6" stroke="#ddd" stroke-width="0.8"/><path d="M133.8 392L137 395" stroke="#444" stroke-width="1"/></g></svg>
<div style="left:28.5px;top:404px;width:109.5px;height:115.5px;background:#707071;"></div>
<div style="left:29px;top:404px;width:108.5px;height:115px;background:#7e7f82;"></div>
<div style="left:138.5px;top:404px;width:8.5px;height:116px;background:#69696a;"></div>
<span class="t" style="left:42px;top:405px;font-size:10px;line-height:12px;color:#f4f4f4;transform:scaleX(0.617);">ブラシサイズ</span>
<span class="t" style="left:104px;top:407px;font-size:9px;line-height:11px;color:#f0f0f0;transform:scaleX(0.692);">4.3</span>
<svg style="left:116px;top:409px;" width="7" height="11" viewBox="0 0 7 11"><path d="M0 4.2L3.5 0L7 4.2Z" fill="#303030"/><path d="M0 6.8L3.5 11L7 6.8Z" fill="#303030"/></svg>
<div style="left:125.5px;top:406px;width:9.5px;height:17px;background:#58585a;border-radius:1px"></div>
<div style="left:126px;top:406.5px;width:8.5px;height:16px;background:#858586;border-radius:1px"></div>
<svg style="left:126px;top:408px;" width="9" height="13" viewBox="0 0 9 13"><ellipse cx="4.5" cy="8" rx="3.6" ry="4" fill="#e2e2e2" stroke="#333" stroke-width="0.8"/><path d="M4.5 1V7M2.5 5L4.5 7.5L6.5 5" stroke="#222" stroke-width="1.3" fill="none"/><ellipse cx="4.5" cy="10" rx="2" ry="1" fill="#999"/></svg>
<div style="left:55px;top:421px;width:29px;height:1px;background:#4c4c4d;"></div>
<div style="left:83.5px;top:419px;width:0.8px;height:3px;background:#4c4c4d;"></div>
<div style="left:55px;top:416px;width:10px;height:6px;background:#4c4c4d;"></div>
<div style="left:55.5px;top:416.5px;width:9px;height:5px;background:linear-gradient(to right,#8a8a8b,#b0b0b1);"></div>
<div style="left:36px;top:424.5px;width:100px;height:1px;background:#868687;"></div>
<span class="t" style="left:41px;top:427px;font-size:10px;line-height:12px;color:#f4f4f4;transform:scaleX(0.825);">不透明度</span>
<span class="t" style="left:102px;top:430px;font-size:9px;line-height:11px;color:#f0f0f0;transform:scaleX(0.767);">100</span>
<svg style="left:116px;top:431px;" width="7" height="11" viewBox="0 0 7 11"><path d="M0 4.2L3.5 0L7 4.2Z" fill="#303030"/><path d="M0 6.8L3.5 11L7 6.8Z" fill="#303030"/></svg>
<div style="left:55px;top:437.5px;width:29.5px;height:6px;background:#4c4c4d;"></div>
<div style="left:55.5px;top:438.0px;width:28.5px;height:5px;background:linear-gradient(to right,#7a7a7b,#b2b2b3);"></div>
<div style="left:36px;top:446.5px;width:100px;height:1px;background:#868687;"></div>
<span class="t" style="left:41px;top:452px;font-size:9px;line-height:11px;color:#b4b4b4;transform:scaleX(0.611);">アン</span>
<div style="left:55px;top:449.5px;width:80.5px;height:16.5px;background:#5a5a5b;border-radius:2px"></div>
<div style="left:55.5px;top:450px;width:79.5px;height:15.5px;background:#727273;border-radius:2px"></div>
<div style="left:90px;top:450px;width:18px;height:15.5px;background:#7b98a9;box-shadow:inset 0 0 0 1px #93b4c8"></div>
<svg style="left:55px;top:450px;" width="80" height="16" viewBox="0 0 80 16"><defs><radialGradient id="aa1"><stop offset="0.45" stop-color="#111"/><stop offset="0.6" stop-color="#bbb"/><stop offset="1" stop-color="#ccc"/></radialGradient><radialGradient id="aa2"><stop offset="0.3" stop-color="#111"/><stop offset="0.7" stop-color="#aaa"/><stop offset="1" stop-color="#c4c4c4"/></radialGradient><radialGradient id="aa3"><stop offset="0.1" stop-color="#111"/><stop offset="0.8" stop-color="#a8a8a8"/><stop offset="1" stop-color="#bbb"/></radialGradient></defs><circle cx="9" cy="7.7" r="4.8" fill="#141414"/><circle cx="26" cy="7.7" r="6.2" fill="url(#aa1)"/><circle cx="44" cy="7.7" r="6.2" fill="url(#aa2)"/><circle cx="62" cy="7.7" r="6.2" fill="url(#aa3)"/><path d="M72 6L78 6L75 10Z" fill="#2e2e2e"/></svg>
<div style="left:36px;top:468.5px;width:100px;height:1px;background:#868687;"></div>
<span class="t" style="left:41px;top:471px;font-size:10px;line-height:12px;color:#f4f4f4;transform:scaleX(0.760);">手ブレ補正</span>
<span class="t" style="left:110px;top:474px;font-size:9px;line-height:11px;color:#f0f0f0;transform:scaleX(0.700);">4</span>
<svg style="left:116px;top:475px;" width="7" height="11" viewBox="0 0 7 11"><path d="M0 4.2L3.5 0L7 4.2Z" fill="#303030"/><path d="M0 6.8L3.5 11L7 6.8Z" fill="#303030"/></svg>
<div style="left:55px;top:487px;width:29px;height:1px;background:#4c4c4d;"></div>
<div style="left:83.5px;top:485px;width:0.8px;height:3px;background:#4c4c4d;"></div>
<div style="left:55px;top:482px;width:12px;height:6px;background:#4c4c4d;"></div>
<div style="left:55.5px;top:482.5px;width:11px;height:5px;background:linear-gradient(to right,#8a8a8b,#b0b0b1);"></div>
<div style="left:36px;top:490.5px;width:100px;height:1px;background:#868687;"></div>
<div style="left:40.5px;top:497px;width:9px;height:9.5px;background:#8c8c8d;border-radius:1px;box-shadow:inset 0 0 0 1px #787879"></div>
<span class="t" style="left:54px;top:496px;font-size:9px;line-height:11px;color:#a2a2a3;transform:scaleX(0.648);">ベクター吸着</span>
<div style="left:93px;top:494px;width:5px;height:14.5px;background:#5c5c5d;"></div>
<div style="left:93.7px;top:494.7px;width:3.6px;height:13.1px;background:#767677;"></div>
<div style="left:99.5px;top:494px;width:5px;height:14.5px;background:#5c5c5d;"></div>
<div style="left:100.2px;top:494.7px;width:3.6px;height:13.1px;background:#767677;"></div>
<div style="left:106px;top:494px;width:5px;height:14.5px;background:#5c5c5d;"></div>
<div style="left:106.7px;top:494.7px;width:3.6px;height:13.1px;background:#767677;"></div>
<div style="left:112.5px;top:494px;width:5px;height:14.5px;background:#5c5c5d;"></div>
<div style="left:113.2px;top:494.7px;width:3.6px;height:13.1px;background:#767677;"></div>
<div style="left:119px;top:494px;width:5px;height:14.5px;background:#5c5c5d;"></div>
<div style="left:119.7px;top:494.7px;width:3.6px;height:13.1px;background:#767677;"></div>
<div style="left:126px;top:494px;width:9.5px;height:15.5px;background:#8a8a8b;border-radius:1px"></div>
<svg style="left:128.5px;top:498px;" width="5" height="7" viewBox="0 0 5 7"><path d="M0.5 0.5L4.5 3.5L0.5 6.5Z" fill="#6e6e6f"/></svg>
<div style="left:28px;top:520.5px;width:120px;height:17px;background:#7e7f82;"></div>
<svg style="left:110px;top:523px;" width="13" height="13" viewBox="0 0 13 13"><circle cx="6.5" cy="6.5" r="4.6" fill="none" stroke="#2a2a2a" stroke-width="1.8" stroke-dasharray="2.2 1.4"/></svg>
<svg style="left:130px;top:522px;" width="13" height="14" viewBox="0 0 13 14"><path d="M3.2 1C1.5 2 1 4.2 2.5 5.8L5 7.5V13H8V7.5L10.5 5.8C12 4.2 11.5 2 9.8 1V4.2L8.2 5.2H4.8L3.2 4.2Z" fill="#efefef" stroke="#222" stroke-width="0.9"/></svg>
<div style="left:146.8px;top:49px;width:1.4px;height:488px;background:#58585a;"></div>
<div style="left:148px;top:33px;width:631px;height:23px;background:#7f8082;"></div>
<div style="left:148px;top:33px;width:631px;height:1px;background:#88898b;"></div>
<div style="left:148px;top:55px;width:631px;height:1px;background:#6c6c6d;"></div>
<svg style="left:160px;top:38px;" width="14" height="14" viewBox="0 0 14 14"><g fill="#262626"><rect x="0.5" y="0.5" width="5.6" height="5.4"/><rect x="7.4" y="0.5" width="5.6" height="5.4"/><rect x="0.5" y="7.3" width="5.6" height="5.4"/><rect x="7.4" y="7.3" width="5.6" height="5.4"/></g></svg>
<svg style="left:191px;top:43px;" width="11" height="6" viewBox="0 0 11 6"><path d="M0.5 0.5H10.5L5.5 5.5Z" fill="#3c3c3d"/></svg>
<div style="left:208px;top:37px;width:29.5px;height:16.5px;background:#68696a;border-radius:2px"></div>
<div style="left:209px;top:38px;width:27.5px;height:14.5px;background:linear-gradient(to bottom,#6a6a6b,#747475);border-radius:1.5px"></div>
<svg style="left:214px;top:38px;" width="18" height="15" viewBox="0 0 18 15"><rect x="1.5" y="2" width="10" height="7.5" rx="1" fill="#c8c8c8" stroke="#222" stroke-width="1.2"/><rect x="3.5" y="4" width="6" height="3.5" fill="#555"/><path d="M4 10L2 12.5" stroke="#222" stroke-width="1.3"/><circle cx="12.5" cy="7.5" r="3.6" fill="#f4f4f4" stroke="#222" stroke-width="1"/><path d="M10 9.5L8 13.5L10.5 12.5" fill="#eee" stroke="#222" stroke-width="0.9"/><path d="M10 2C12 0.5 14.5 1 16 2.5" stroke="#222" fill="none" stroke-width="1"/></svg>
<div style="left:243.5px;top:38px;width:1px;height:14px;background:#8a8b8d;"></div>
<svg style="left:251px;top:38px;" width="14" height="14" viewBox="0 0 14 14"><path d="M3.5 2.5H9L12.5 6V13H3.5Z" fill="#f6f6f6" stroke="#1e1e1e" stroke-width="1.3"/><path d="M9 2.5V6H12.5" fill="#ccc" stroke="#1e1e1e" stroke-width="1"/><path d="M1 1.5H4" stroke="#1e1e1e" stroke-width="1.4"/></svg>
<svg style="left:280px;top:38px;" width="15" height="14" viewBox="0 0 15 14"><path d="M1.5 4.5H5.5L6.5 5.5H12.5V12.5H1.5Z" fill="#e4e4e4" stroke="#1e1e1e" stroke-width="1.3"/><path d="M1.5 7H12.5" stroke="#1e1e1e" stroke-width="1"/><path d="M7.5 2.5C9.5 1 12 1.2 13.5 3" fill="none" stroke="#1e1e1e" stroke-width="1.2"/><path d="M13.9 0.8V3.6H11.2" fill="none" stroke="#1e1e1e" stroke-width="1"/></svg>
<svg style="left:310px;top:38px;" width="14" height="14" viewBox="0 0 14 14"><rect x="1.3" y="1" width="11.7" height="12.2" fill="#1a1a1a"/><rect x="3.3" y="1" width="8.6" height="9.4" fill="#fbfbfb"/></svg>
<div style="left:334px;top:38px;width:1px;height:14px;background:#727375;"></div>
<div style="left:335px;top:38px;width:1px;height:14px;background:#868789;"></div>
<svg style="left:345px;top:39px;" width="15" height="12" viewBox="0 0 15 12"><path d="M5 1.8H10.5C13.5 1.8 13.5 7 10.5 7H3" fill="none" stroke="#262626" stroke-width="1.7"/><path d="M5.6 3.8L1.4 7L5.6 10.2Z" fill="#262626"/><path d="M4 1.8H7" stroke="#262626" stroke-width="1.7" stroke-dasharray="1 0.8"/></svg>
<svg style="left:374px;top:39px;" width="15" height="12" viewBox="0 0 15 12"><path d="M10 5H4.5C1.5 5 1.5 10.2 4.5 10.2H10" fill="none" stroke="#6a6a6b" stroke-width="1.7"/><path d="M9.4 1.8L13.6 5L9.4 8.2Z" fill="#6a6a6b"/></svg>
<div style="left:400px;top:38px;width:1px;height:14px;background:#727375;"></div>
<div style="left:401px;top:38px;width:1px;height:14px;background:#868789;"></div>
<svg style="left:410px;top:38.5px;" width="13" height="13" viewBox="0 0 13 13"><circle cx="6.50" cy="1.60" r="1.35" fill="#262626"/><circle cx="10.36" cy="3.48" r="1.45" fill="#262626"/><circle cx="11.27" cy="7.60" r="1.55" fill="#262626"/><circle cx="8.65" cy="10.90" r="1.35" fill="#262626"/><circle cx="4.35" cy="10.90" r="1.65" fill="#262626"/><circle cx="1.73" cy="7.60" r="1.55" fill="#262626"/><circle cx="2.69" cy="3.42" r="1.45" fill="#262626"/></svg>
<svg style="left:439px;top:38.5px;" width="14" height="14" viewBox="0 0 14 14"><g fill="#97989a"><rect x="3.5" y="3.5" width="7" height="7"/><rect x="4.5" y="0.5" width="5" height="2"/><rect x="4.5" y="11.5" width="5" height="2"/><rect x="0.5" y="4.5" width="2" height="5"/><rect x="11.5" y="4.5" width="2" height="5"/></g></svg>
<svg style="left:467.5px;top:37.5px;" width="17.6" height="15.4" viewBox="0 0 16 14"><path d="M6 4.5L12 7L9.5 12.5L3.5 10Z" fill="#f8f8f8" stroke="#1a1a1a" stroke-width="0.9"/><path d="M6 4.5C3.5 6 2 8.5 1.2 10.8" stroke="#1a1a1a" stroke-width="1.8" fill="none"/><path d="M7 5.5L10.5 1.5L12 2.5L9 6.5" fill="#ddd" stroke="#1a1a1a" stroke-width="0.9"/></svg>
<svg style="left:498px;top:38px;" width="15" height="14" viewBox="0 0 15 14"><circle cx="7.5" cy="7" r="3.3" fill="none" stroke="#262626" stroke-width="1.5"/><path d="M2.2 1.7L5.2 4.7M12.8 1.7L9.8 4.7M2.2 12.3L5.2 9.3M12.8 12.3L9.8 9.3" stroke="#262626" stroke-width="1.4"/><g fill="#262626"><rect x="0.8" y="0.3" width="2.8" height="2.8"/><rect x="11.4" y="0.3" width="2.8" height="2.8"/><rect x="0.8" y="10.9" width="2.8" height="2.8"/><rect x="11.4" y="10.9" width="2.8" height="2.8"/></g></svg>
<div style="left:523px;top:38px;width:1px;height:14px;background:#727375;"></div>
<div style="left:524px;top:38px;width:1px;height:14px;background:#868789;"></div>
<svg style="left:534px;top:38px;" width="14" height="14" viewBox="0 0 14 14"><rect x="2" y="3" width="9" height="9" fill="none" stroke="#6a6a6b" stroke-width="1" stroke-dasharray="1.5 1"/><path d="M1.5 12.5L12.5 1" stroke="#6a6a6b" stroke-width="1.2"/></svg>
<svg style="left:563px;top:38px;" width="14" height="14" viewBox="0 0 14 14"><rect x="1.5" y="2" width="11" height="10.5" fill="#77787a" stroke="#737476" stroke-width="0.8"/><path d="M12.5 2V12.5H1.5Z" fill="#6a6a6b"/></svg>
<svg style="left:592px;top:38px;" width="14" height="14" viewBox="0 0 14 14"><rect x="1" y="1.5" width="12" height="11" fill="#9a9b9d"/><rect x="3" y="3.5" width="8" height="7" fill="#888" stroke="#5c5c5d" stroke-width="0.9" stroke-dasharray="1.4 0.9"/></svg>
<div style="left:617px;top:38px;width:1px;height:14px;background:#727375;"></div>
<div style="left:618px;top:38px;width:1px;height:14px;background:#868789;"></div>
<svg style="left:627px;top:38px;" width="15" height="14" viewBox="0 0 15 14"><path d="M2.5 11.5H10V13H2.5Z" fill="#3a8ad0"/><path d="M2.5 3.5V11.5" stroke="#222" stroke-width="1.3"/><path d="M2.5 3.5L10.5 11" stroke="#222" stroke-width="1.6"/><path d="M9.5 1.5L12.5 1.5L11.5 11.5L9.8 11.5Z" fill="#e8e8e8" stroke="#222" stroke-width="1"/></svg>
<svg style="left:657px;top:38px;" width="15" height="14" viewBox="0 0 15 14"><path d="M2 11H13" stroke="#3a8ad0" stroke-width="1.3"/><path d="M2.5 11.5C2.5 8 5 6.2 8 6.2" fill="none" stroke="#222" stroke-width="1.5"/><path d="M2 11.5H8.5" stroke="#222" stroke-width="1.4"/><path d="M8.5 1.5L11.8 1.5L10.8 11.5L8.8 11.5Z" fill="#e8e8e8" stroke="#222" stroke-width="1"/></svg>
<svg style="left:686px;top:37.5px;" width="15" height="15" viewBox="0 0 15 15"><path d="M2.5 4.5H12.5M2.5 10.5H12.5M4.5 2.5V12.5M10.5 2.5V12.5" stroke="#3a8ad0" stroke-width="1.3" stroke-dasharray="2 1.2"/><path d="M6.2 1.2L9 1.2L8.6 12L7 13.5L6 12Z" fill="#bbb" stroke="#222" stroke-width="1.1"/></svg>
<div style="left:711px;top:38px;width:1px;height:14px;background:#727375;"></div>
<div style="left:712px;top:38px;width:1px;height:14px;background:#868789;"></div>
<svg style="left:725px;top:38px;" width="16" height="14" viewBox="0 0 16 14"><rect x="1.5" y="3.5" width="13" height="9.5" rx="1" fill="#e2e2e2" stroke="#222" stroke-width="1.2"/><rect x="3.2" y="8" width="9.6" height="3.4" fill="#333"/><path d="M2 2L4 1M14 2L12 1M6 1H10" stroke="#222" stroke-width="1.1"/></svg>
<svg style="left:757px;top:43px;" width="11" height="6" viewBox="0 0 11 6"><path d="M0.5 0.5H10.5L5.5 5.5Z" fill="#3c3c3d"/></svg>
<div style="left:148px;top:56px;width:631px;height:15px;background:#555556;"></div>
<div style="left:148px;top:57px;width:69.5px;height:14.3px;background:linear-gradient(to bottom,#8c8c8d,#747475);border-radius:1px 1px 0 0"></div>
<span class="t" style="left:151px;top:59px;font-size:8px;line-height:10px;color:#eeeeee;transform:scaleX(0.780);">新規キャンバス*</span>
<svg style="left:207.5px;top:61.5px;" width="6" height="6" viewBox="0 0 6 6"><circle cx="3" cy="3" r="2.2" fill="#3a3a3b"/></svg>
<div style="left:148px;top:70.8px;width:631px;height:1px;background:#6a6a6b;"></div>
<div style="left:148px;top:71.8px;width:631px;height:1px;background:#3e3e3f;"></div>
<div style="left:148px;top:72.6px;width:631px;height:438.4px;background:#4a4a4a;"></div>
<div style="left:325px;top:79px;width:265.3px;height:424.3px;background:#ffffff;box-shadow:1px 1px 0 #353535"></div>
<div style="left:761px;top:57px;width:16px;height:15px;background:#8a8a8b;border-radius:2px"></div>
<div style="left:769px;top:72px;width:7.5px;height:438.5px;background:#707172;"></div>
<div style="left:769px;top:202px;width:7.5px;height:176px;background:linear-gradient(to right,#878889,#7c7d7e);border-radius:1px"></div>
<svg style="left:770px;top:287px;" width="6" height="6" viewBox="0 0 6 6"><path d="M0.5 0.5H5.5M0.5 2.5H5.5M0.5 4.5H5.5" stroke="#4c4c4d" stroke-width="0.8"/></svg>
<div style="left:776.5px;top:49px;width:2.5px;height:488px;background:#6c6c6d;"></div>
<div style="left:148px;top:510.5px;width:631px;height:10.5px;background:#7a7a7b;"></div>
<div style="left:148.5px;top:510.5px;width:52px;height:8.3px;background:#6c6c6d;"></div>
<svg style="left:148.5px;top:510.5px;" width="52" height="8.3" viewBox="0 0 52 8.3"><path d="M0 8.3L47.5 0H52V8.3Z" fill="#4b4b4c"/></svg>
<div style="left:171.5px;top:510.5px;width:2px;height:8.3px;background:#7e7e7f;"></div>
<span class="t" style="left:150px;top:509px;font-size:9px;line-height:11px;color:#fafafa;transform:scaleX(0.750);">37.7</span>
<svg style="left:207px;top:510.5px;" width="10" height="10" viewBox="0 0 10 10"><circle cx="4.5" cy="4.5" r="3.6" fill="#ededed" stroke="#222" stroke-width="1.1"/><path d="M2.7 4.5H6.3" stroke="#222" stroke-width="1.2"/><path d="M7.2 7.4L9 9.2" stroke="#222" stroke-width="1.5"/></svg>
<svg style="left:227px;top:510.5px;" width="10" height="10" viewBox="0 0 10 10"><circle cx="4.5" cy="4.5" r="3.6" fill="#ededed" stroke="#222" stroke-width="1.1"/><path d="M2.7 4.5H6.3" stroke="#222" stroke-width="1.2"/><path d="M7.2 7.4L9 9.2" stroke="#222" stroke-width="1.5"/><path d="M4.5 2.7V6.3" stroke="#222" stroke-width="1.2"/></svg>
<svg style="left:246.5px;top:510px;" width="10" height="10" viewBox="0 0 10 10"><rect x="0.5" y="0.5" width="8.5" height="8.5" fill="#0e0e0e"/><rect x="2.6" y="2.6" width="4.3" height="4.3" fill="#2a2a2a" stroke="#5a5a5a" stroke-width="0.8"/></svg>
<div style="left:262px;top:510.5px;width:51px;height:8.3px;background:#6c6c6d;"></div>
<svg style="left:262px;top:510.5px;" width="51" height="8.3" viewBox="0 0 51 8.3"><path d="M14 8.3L24 5.5V8.3Z" fill="#4b4b4c"/><path d="M26.5 8.3V4L30 0H40.5L51 8.3Z" fill="#4b4b4c"/></svg>
<div style="left:286px;top:510.5px;width:2px;height:8.3px;background:#7e7e7f;"></div>
<span class="t" style="left:265px;top:509px;font-size:9px;line-height:11px;color:#fafafa;transform:scaleX(0.692);">0.0</span>
<svg style="left:319.5px;top:510.5px;" width="10" height="10" viewBox="0 0 10 10"><g><path d="M2.2 8.5C0.8 4 3.5 1.6 6 2.2C8.4 2.8 8.8 6 8 8.5" fill="none" stroke="#222" stroke-width="1.6"/><path d="M0.3 6L2.4 9.6L4.6 6.6Z" fill="#222"/></g></svg>
<svg style="left:338.5px;top:510.5px;" width="10" height="10" viewBox="0 0 10 10"><g transform="translate(10,0) scale(-1,1)"><path d="M2.2 8.5C0.8 4 3.5 1.6 6 2.2C8.4 2.8 8.8 6 8 8.5" fill="none" stroke="#222" stroke-width="1.6"/><path d="M0.3 6L2.4 9.6L4.6 6.6Z" fill="#222"/></g></svg>
<svg style="left:357.5px;top:510px;" width="11" height="11" viewBox="0 0 11 11"><circle cx="5.5" cy="5.5" r="3.7" fill="none" stroke="#505051" stroke-width="1.5" stroke-dasharray="1.6 1.2"/></svg>
<div style="left:372.5px;top:510.5px;width:1px;height:10px;background:#5c5c5d;"></div>
<div style="left:373.5px;top:511px;width:395.5px;height:9px;background:#707071;"></div>
<div style="left:469px;top:511.3px;width:300px;height:6.4px;background:linear-gradient(to bottom,#888889,#757677);border-radius:1px"></div>
<div style="left:373.5px;top:517.7px;width:395.5px;height:2.8px;background:#7c7d7f;"></div>
<svg style="left:567px;top:512.5px;" width="6" height="4.5" viewBox="0 0 6 4.5"><path d="M0.5 0V4.5M2.5 0V4.5M4.5 0V4.5" stroke="#4c4c4d" stroke-width="0.8"/></svg>
<div style="left:768.5px;top:509px;width:8.5px;height:9.5px;background:#848586;border-radius:1px"></div>
<div style="left:148px;top:519.6px;width:631px;height:1.6px;background:#8a8b8c;"></div>
<div style="left:148px;top:521.2px;width:631px;height:13.5px;background:linear-gradient(to bottom,#4c4c4d,#5f5f60);"></div>
<div style="left:148px;top:534.7px;width:631px;height:3px;background:#7c7d7f;"></div>
<div style="left:148.5px;top:523px;width:15px;height:11px;background:#646465;"></div>
<svg style="left:152.3px;top:526px;" width="8" height="7" viewBox="0 0 8 7"><path d="M0.5 0.5L2.8 3L0.5 5.5Z" fill="#949495"/><path d="M3.6 0.8H7.2M3.6 3H7.2M3.6 5.2H7.2" stroke="#8e8e8f" stroke-width="0.9"/></svg>
<div style="left:165px;top:524.5px;width:49px;height:10.5px;background:linear-gradient(to bottom,#8b8b8c,#7f7f80);border-radius:1px 1px 0 0"></div>
<svg style="left:168.5px;top:526px;" width="12" height="9" viewBox="0 0 12 9"><rect x="0.5" y="0.5" width="11" height="8" fill="#1c1c1c"/><path d="M2.5 1.5V7.5M4.5 1.5V7.5M6.5 1.5V7.5" stroke="#f2f2f2" stroke-width="1.1"/><path d="M8.5 2.5H10.5M8.5 4.5H10.5M8.5 6.5H10.5" stroke="#ccc" stroke-width="0.9"/></svg>
<span class="t" style="left:183px;top:526px;font-size:8px;line-height:10px;color:#e8e8e8;transform:scaleX(0.596);">タイムライン</span>
<div style="left:763px;top:520.5px;width:14.5px;height:17px;background:#68696a;"></div>
<svg style="left:765px;top:529px;" width="11" height="7" viewBox="0 0 11 7"><path d="M1 6L5.5 1.8L10 6" fill="none" stroke="#8f8f90" stroke-width="1.8"/></svg>
<div style="left:649px;top:61.7px;width:123px;height:120px;background:#505051;box-shadow:0 0 0 0.5px #3c3c3d"></div>
<div style="left:650px;top:62.5px;width:121px;height:11px;background:linear-gradient(to bottom,#4a4a4b,#5e5e5f);"></div>
<div style="left:651.5px;top:73.5px;width:116.5px;height:106.5px;background:#7d7e80;"></div>
<svg style="left:654px;top:64.5px;" width="8" height="7" viewBox="0 0 8 7"><path d="M0.5 0.5L3 3.5L0.5 6.5Z" fill="#9a9a9a"/><path d="M4.5 1H8M4.5 3.5H8M4.5 6H8" stroke="#979797" stroke-width="1"/></svg>
<span class="t" style="left:693px;top:63.5px;font-size:8px;line-height:10px;color:#d6d6d6;transform:scaleX(0.571);">カラーサークル</span>
<svg style="left:748px;top:63.5px;" width="9.5" height="9.5" viewBox="0 0 9.5 9.5"><rect x="0" y="0" width="9.5" height="9.5" rx="4" fill="#1c1c1c"/><rect x="1.8" y="5.6" width="6" height="1.5" fill="#ddd"/><rect x="1.5" y="3" width="6.5" height="1" fill="#777"/></svg>
<svg style="left:758.5px;top:63.5px;" width="9.5" height="9.5" viewBox="0 0 9.5 9.5"><rect x="0" y="0" width="9.5" height="9.5" rx="4" fill="#1c1c1c"/><path d="M2.6 2.6L7 7M7 2.6L2.6 7" stroke="#eee" stroke-width="1.5"/></svg>
<div style="left:666px;top:77.6px;width:87.4px;height:87.4px;border-radius:50%;background:conic-gradient(from -60deg,#ff0000,#ffff00,#00ff00,#00ffff,#0000ff,#ff00ff,#ff0000);-webkit-mask:radial-gradient(circle closest-side,transparent 78.5%,#000 80%,#000 98.5%,transparent 100%);mask:radial-gradient(circle closest-side,transparent 78.5%,#000 80%,#000 98.5%,transparent 100%)"></div>
<div style="left:688.3px;top:99.8px;width:43.4px;height:43.4px;background:linear-gradient(to bottom,rgba(0,0,0,0),#000),linear-gradient(to right,#fff,#f40c1c);box-shadow:0 0 0 0.7px #333"></div>
<svg style="left:724px;top:100px;" width="7" height="7" viewBox="0 0 7 7"><rect x="0.8" y="0.8" width="5" height="5" fill="none" stroke="#f4f4f4" stroke-width="1.1"/><rect x="0.2" y="0.2" width="6.2" height="6.2" fill="none" stroke="#333" stroke-width="0.4"/></svg>
<svg style="left:667px;top:97px;" width="16" height="12" viewBox="0 0 16 12"><g transform="rotate(28 8 6)"><rect x="1.5" y="4" width="12" height="3.2" fill="none" stroke="#1c1c1c" stroke-width="0.9"/><path d="M0 5.6L2 4V7.2Z" fill="#ddd" stroke="#1c1c1c" stroke-width="0.6"/></g></svg>
<div style="left:659.5px;top:158px;width:12px;height:12px;background:#ffff00;box-shadow:0 0 0 0.5px #555"></div>
<div style="left:652px;top:150px;width:12px;height:12px;background:#a9c9dc;"></div>
<div style="left:653px;top:151px;width:10px;height:10px;background:#3a3a3b;"></div>
<div style="left:654.3px;top:152.3px;width:7.6px;height:7.4px;background:#ee1c24;"></div>
<div style="left:651.5px;top:171.3px;width:20px;height:5.4px;background:#fff;box-shadow:0 0 0 0.5px #444"></div>
<svg style="left:651.5px;top:171.3px;" width="20" height="5.4" viewBox="0 0 20 5.4"><g fill="#9a9a9a"><rect x="0" y="2.7" width="2.5" height="2.7"/><rect x="2.5" y="0" width="2.5" height="2.7"/><rect x="5" y="2.7" width="2.5" height="2.7"/><rect x="7.5" y="0" width="2.5" height="2.7"/><rect x="10" y="2.7" width="2.5" height="2.7"/><rect x="12.5" y="0" width="2.5" height="2.7"/><rect x="15" y="2.7" width="2.5" height="2.7"/><rect x="17.5" y="0" width="2.5" height="2.7"/></g></svg>
<div style="left:676px;top:170px;width:6px;height:6px;background:#101010;"></div>
<span class="t" style="left:677px;top:169px;font-size:6px;line-height:8px;color:#ffffff;transform:scaleX(1.000);font-weight:bold">H</span>
<span class="t" style="left:684px;top:167px;font-size:10px;line-height:12px;color:#e6e6e6;transform:scaleX(0.706);-webkit-text-stroke:0.3px #e0e0e0">358</span>
<div style="left:698px;top:170px;width:6px;height:6px;background:#101010;"></div>
<span class="t" style="left:699px;top:169px;font-size:6px;line-height:8px;color:#ffffff;transform:scaleX(1.000);font-weight:bold">S</span>
<span class="t" style="left:710px;top:167px;font-size:10px;line-height:12px;color:#e6e6e6;transform:scaleX(0.727);-webkit-text-stroke:0.3px #e0e0e0">88</span>
<div style="left:721px;top:170px;width:6px;height:6px;background:#101010;"></div>
<span class="t" style="left:722px;top:169px;font-size:6px;line-height:8px;color:#ffffff;transform:scaleX(1.000);font-weight:bold">V</span>
<span class="t" style="left:732.5px;top:167px;font-size:10px;line-height:12px;color:#e6e6e6;transform:scaleX(0.727);-webkit-text-stroke:0.3px #e0e0e0">93</span>
<div style="left:751px;top:162.5px;width:12px;height:12px;border-radius:50%;background:conic-gradient(from -60deg,#ff0000,#ffff00,#00ff00,#00ffff,#0000ff,#ff00ff,#ff0000);-webkit-mask:radial-gradient(circle closest-side,transparent 48%,#000 55%,#000 96%,transparent 100%);mask:radial-gradient(circle closest-side,transparent 48%,#000 55%,#000 96%,transparent 100%)"></div>
<svg style="left:754px;top:165.5px;" width="6" height="6" viewBox="0 0 6 6"><path d="M1 5L3.5 1L5 2.5Z" fill="#e8e8e8" stroke="#444" stroke-width="0.5"/></svg>
<div style="left:777px;top:48px;width:183px;height:492px;background:#5e5e5f;"></div>
<div style="left:778.8px;top:49px;width:124.5px;height:488px;background:#6c6c6d;"></div>
<svg style="left:781px;top:37px;" width="7" height="7" viewBox="0 0 7 7"><path d="M1 0V7M3.5 0V7M6 0V7" stroke="#8a8a8a" stroke-width="1"/></svg>
<svg style="left:922.5px;top:35px;" width="6" height="12" viewBox="0 0 6 12"><path d="M0.8 0.8L5 6L0.8 11.2" fill="none" stroke="#9a9a9b" stroke-width="1.7"/></svg>
<div style="left:929.5px;top:33px;width:1.5px;height:15px;background:#7a7a7b;"></div>
<svg style="left:933px;top:37px;" width="7" height="7" viewBox="0 0 7 7"><path d="M1 0V7M3.5 0V7M6 0V7" stroke="#8a8a8a" stroke-width="1"/></svg>
<div style="left:779px;top:50px;width:124px;height:15px;background:linear-gradient(to bottom,#4f4f50,#5f5f60);"></div>
<div style="left:780px;top:51px;width:13.5px;height:12.5px;background:#656566;"></div>
<svg style="left:783.3px;top:55px;" width="8" height="7" viewBox="0 0 8 7"><path d="M0.5 0.5L2.8 3L0.5 5.5Z" fill="#949495"/><path d="M3.6 0.8H7.2M3.6 3H7.2M3.6 5.2H7.2" stroke="#8e8e8f" stroke-width="0.9"/></svg>
<div style="left:795px;top:54px;width:49px;height:11.5px;background:linear-gradient(to bottom,#8b8b8c,#808081);border-radius:1px 1px 0 0"></div>
<span class="t" style="left:814px;top:56px;font-size:8px;line-height:10px;color:#e6e6e6;transform:scaleX(0.583);">ナビゲーター</span>
<svg style="left:797.5px;top:54px;" width="15" height="13" viewBox="0 0 15 13"><rect x="4.2" y="5" width="8.3" height="6.4" fill="#d8d8d8" stroke="#f6f6f6" stroke-width="0.9"/><rect x="1.2" y="2.6" width="8" height="6" rx="0.8" fill="#fdfdfd" stroke="#cc1a22" stroke-width="1.5"/></svg>
<div style="left:779px;top:65px;width:124px;height:3.3px;background:#7b7b7c;"></div>
<div style="left:779px;top:68.3px;width:123.3px;height:131.7px;background:#4a4a4a;"></div>
<div style="left:779px;top:72.8px;width:123.3px;height:3px;background:#b3272c;"></div>
<div style="left:804px;top:76px;width:73px;height:117px;background:#ffffff;"></div>
<div style="left:779px;top:193.8px;width:123.3px;height:1.9px;background:#8e3236;"></div>
<div style="left:779px;top:200px;width:124px;height:38px;background:#7d7e80;"></div>
<span class="t" style="left:796.5px;top:203.5px;font-size:9.5px;line-height:11.5px;color:#f4f4f4;transform:scaleX(0.711);-webkit-text-stroke:0.25px #f0f0f0">37.7</span>
<span class="t" style="left:800.5px;top:220.5px;font-size:9.5px;line-height:11.5px;color:#f4f4f4;transform:scaleX(0.731);-webkit-text-stroke:0.25px #f0f0f0">0.0</span>
<svg style="left:815px;top:206px;" width="11" height="11" viewBox="0 0 11 11"><circle cx="4.6" cy="4.6" r="3.7" fill="#e9e9e9" stroke="#222" stroke-width="1.1"/><path d="M2.8 4.6H6.4" stroke="#222" stroke-width="1.2"/><path d="M7.2 7.4L10 10.4" stroke="#222" stroke-width="1.7"/></svg>
<svg style="left:832px;top:206px;" width="11" height="11" viewBox="0 0 11 11"><circle cx="4.6" cy="4.6" r="3.7" fill="#e9e9e9" stroke="#222" stroke-width="1.1"/><path d="M2.8 4.6H6.4" stroke="#222" stroke-width="1.2"/><path d="M7.2 7.4L10 10.4" stroke="#222" stroke-width="1.7"/><path d="M4.6 2.8V6.4" stroke="#222" stroke-width="1.2"/></svg>
<svg style="left:849.5px;top:206px;" width="12" height="12" viewBox="0 0 12 12"><rect x="0.3" y="0.3" width="11" height="11" fill="#0e0e0e"/><rect x="2.8" y="2.8" width="6" height="6" fill="#2c2c2c" stroke="#666" stroke-width="0.8"/></svg>
<div style="left:865px;top:205px;width:1px;height:30px;background:#707071;"></div>
<svg style="left:869.5px;top:206px;" width="13" height="12" viewBox="0 0 13 12"><rect x="0.5" y="0.5" width="8.5" height="6.5" fill="#f4f4f4" stroke="#222" stroke-width="0.8"/><rect x="0.5" y="0.5" width="8.5" height="1.6" fill="#111"/><rect x="3.5" y="4.5" width="8.5" height="6.5" fill="#f4f4f4" stroke="#222" stroke-width="0.8"/><path d="M5.5 3L10 8" stroke="#111" stroke-width="1.4"/><path d="M10.8 8.8L8.2 8.2L10.2 6.2Z" fill="#111"/></svg>
<svg style="left:887.5px;top:206px;" width="12" height="12" viewBox="0 0 12 12"><rect x="0.5" y="0.5" width="11" height="10.5" fill="#f6f6f6" stroke="#222" stroke-width="0.8"/><rect x="0.5" y="0.5" width="11" height="1.8" fill="#111"/><path d="M3 4L9 9.5" stroke="#111" stroke-width="1.5"/></svg>
<svg style="left:815px;top:222.5px;" width="12" height="11" viewBox="0 0 12 11"><g><path d="M3 9.5C1.4 4.5 4.4 1.6 7.2 2.2C10 2.8 10.6 6.5 9.4 9.5" fill="none" stroke="#1c1c1c" stroke-width="1.9"/><path d="M0.4 6.4L3 10.8L5.8 7Z" fill="#1c1c1c"/></g></svg>
<svg style="left:832px;top:222.5px;" width="12" height="11" viewBox="0 0 12 11"><g transform="translate(12,0) scale(-1,1)"><path d="M3 9.5C1.4 4.5 4.4 1.6 7.2 2.2C10 2.8 10.6 6.5 9.4 9.5" fill="none" stroke="#1c1c1c" stroke-width="1.9"/><path d="M0.4 6.4L3 10.8L5.8 7Z" fill="#1c1c1c"/></g></svg>
<svg style="left:850px;top:222.5px;" width="12" height="12" viewBox="0 0 12 12"><circle cx="6" cy="6" r="4.3" fill="none" stroke="#525253" stroke-width="1.8" stroke-dasharray="1.7 1.3"/></svg>
<svg style="left:869.5px;top:222.5px;" width="13" height="12" viewBox="0 0 13 12"><path d="M2.5 7C2 3 4.5 1.2 7 1.6C9.5 2 10.4 4.4 10 6.5" fill="none" stroke="#1c1c1c" stroke-width="1.6"/><path d="M6.5 2.5V11.5" stroke="#1c1c1c" stroke-width="0.9" stroke-dasharray="1.4 0.9"/><path d="M1 7L5 9.2L1 11.5Z" fill="#f2f2f2"/><path d="M12 7L8 9.2L12 11.5Z" fill="#1c1c1c"/></svg>
<svg style="left:887px;top:222.5px;" width="13" height="12" viewBox="0 0 13 12"><path d="M5 9.6C1.2 8.6 1 4 4 2.6C5.6 1.8 7.4 2.2 8.4 3.2" fill="none" stroke="#1c1c1c" stroke-width="1.6"/><path d="M4.5 6.3H12" stroke="#1c1c1c" stroke-width="0.9" stroke-dasharray="1.4 0.9"/><path d="M6.5 1L11.5 1L9 5Z" fill="#1c1c1c"/><path d="M6.5 11.5L11.5 11.5L9 7.6Z" fill="#f2f2f2"/></svg>
<div style="left:779px;top:238.3px;width:124px;height:1.7px;background:#555556;"></div>
<div style="left:779px;top:240px;width:124px;height:14.5px;background:linear-gradient(to bottom,#4f4f50,#5f5f60);"></div>
<div style="left:780px;top:241px;width:13.5px;height:12.0px;background:#656566;"></div>
<svg style="left:783.3px;top:245px;" width="8" height="7" viewBox="0 0 8 7"><path d="M0.5 0.5L2.8 3L0.5 5.5Z" fill="#949495"/><path d="M3.6 0.8H7.2M3.6 3H7.2M3.6 5.2H7.2" stroke="#8e8e8f" stroke-width="0.9"/></svg>
<div style="left:795px;top:244px;width:64px;height:11.0px;background:linear-gradient(to bottom,#8b8b8c,#808081);border-radius:1px 1px 0 0"></div>
<span class="t" style="left:813px;top:246px;font-size:8px;line-height:10px;color:#e6e6e6;transform:scaleX(0.620);">レイヤープロパティ</span>
<svg style="left:797px;top:242px;" width="14" height="14" viewBox="0 0 14 14"><rect x="0.5" y="9.5" width="12" height="2.6" fill="#0c0c0c"/><rect x="0.5" y="12.1" width="12" height="1" fill="#e8e8e8"/><path d="M2.5 6L5.5 9.6C6.5 5.5 9 2.5 12.5 0.8" fill="none" stroke="#d01820" stroke-width="1.5"/></svg>
<div style="left:779px;top:254.5px;width:124px;height:3px;background:#7b7b7c;"></div>
<div style="left:779px;top:257.5px;width:124px;height:73px;background:#727374;"></div>
<div style="left:780px;top:257.5px;width:114.5px;height:72.5px;background:#7e7f81;"></div>
<div style="left:895px;top:258px;width:6.5px;height:70.5px;background:#767778;box-shadow:0 0 0 0.6px #8a8b8c"></div>
<span class="t" style="left:786.5px;top:257.5px;font-size:9px;line-height:11px;color:#f2f2f2;transform:scaleX(0.944);">効果</span>
<div style="left:806px;top:264px;width:84px;height:1px;background:#888a8b;"></div>
<div style="left:830px;top:268px;width:61.5px;height:17.5px;background:#5e5f60;border-radius:2.5px"></div>
<div style="left:830.8px;top:268.8px;width:60px;height:16px;background:linear-gradient(to bottom,#787979,#707172);border-radius:2px"></div>
<svg style="left:833px;top:271px;" width="12" height="12" viewBox="0 0 12 12"><circle cx="6" cy="6" r="4.3" fill="#0e0e0e" stroke="#fafafa" stroke-width="2"/></svg>
<svg style="left:850px;top:271px;" width="12" height="12" viewBox="0 0 12 12"><defs><pattern id="tn" width="2" height="2" patternUnits="userSpaceOnUse"><rect width="1" height="1" fill="#0c0c0c"/><rect x="1" y="1" width="1" height="1" fill="#0c0c0c"/></pattern></defs><rect x="0" y="0" width="12" height="12" fill="#5a5a5b"/><rect x="0" y="0" width="12" height="12" fill="url(#tn)"/></svg>
<svg style="left:866.5px;top:270.5px;" width="12" height="12" viewBox="0 0 12 12"><rect x="3" y="3" width="8.5" height="8.5" fill="#f8f8f8"/><path d="M0.5 0.5H7.5L9.5 2.5V9.5H0.5Z" fill="#4db2f6"/></svg>
<svg style="left:883px;top:275px;" width="7" height="5" viewBox="0 0 7 5"><path d="M0.3 0.3H6.7L3.5 4.5Z" fill="#3a3a3b"/></svg>
<span class="t" style="left:786.5px;top:286.5px;font-size:9px;line-height:11px;color:#f2f2f2;transform:scaleX(0.926);">表現色</span>
<div style="left:813px;top:292.5px;width:77px;height:1px;background:#888a8b;"></div>
<div style="left:790px;top:299px;width:64.5px;height:17px;background:#5e5f60;border-radius:2.5px"></div>
<div style="left:790.8px;top:299.8px;width:63px;height:15.5px;background:linear-gradient(to bottom,#868788,#747576);border-radius:2px"></div>
<div style="left:800px;top:303px;width:3.7px;height:10px;background:#ee7a8c;"></div>
<div style="left:803.7px;top:303px;width:3.7px;height:10px;background:#5aa8ee;"></div>
<div style="left:807.4px;top:303px;width:3.6px;height:10px;background:#84e496;"></div>
<span class="t" style="left:815px;top:302.5px;font-size:9px;line-height:11px;color:#f2f2f2;transform:scaleX(0.704);">カラー</span>
<svg style="left:844.5px;top:306px;" width="8" height="5" viewBox="0 0 8 5"><path d="M0.3 0.3H7.7L4 4.7Z" fill="#3a3a3b"/></svg>
<div style="left:779px;top:330.3px;width:124px;height:2.7px;background:#58585a;"></div>
<div style="left:779px;top:333px;width:124px;height:14.5px;background:linear-gradient(to bottom,#4f4f50,#5f5f60);"></div>
<div style="left:780px;top:334px;width:13.5px;height:12.0px;background:#656566;"></div>
<svg style="left:783.3px;top:338px;" width="8" height="7" viewBox="0 0 8 7"><path d="M0.5 0.5L2.8 3L0.5 5.5Z" fill="#949495"/><path d="M3.6 0.8H7.2M3.6 3H7.2M3.6 5.2H7.2" stroke="#8e8e8f" stroke-width="0.9"/></svg>
<div style="left:795px;top:337px;width:40px;height:11.0px;background:linear-gradient(to bottom,#8b8b8c,#808081);border-radius:1px 1px 0 0"></div>
<span class="t" style="left:813px;top:339px;font-size:8px;line-height:10px;color:#e6e6e6;transform:scaleX(0.594);">レイヤー</span>
<svg style="left:797.5px;top:335px;" width="13" height="15" viewBox="0 0 13 15"><g fill="none" stroke-width="0.9"><path d="M0.8 3.2L6.5 1L12.2 3.2L6.5 5.4Z" fill="#555" stroke="#1e1e1e"/><path d="M0.8 6.2L6.5 4L12.2 6.2L6.5 8.4Z" fill="#888" stroke="#eee"/><path d="M0.8 9.2L6.5 7L12.2 9.2L6.5 11.4Z" fill="#555" stroke="#1e1e1e"/><path d="M0.8 12L6.5 9.8L12.2 12L6.5 14.2Z" fill="#fafafa" stroke="#eee"/></g></svg>
<div style="left:779px;top:347.5px;width:124px;height:189.5px;background:#7d7e80;"></div>
<div style="left:779.5px;top:351px;width:61px;height:16.5px;background:#5e5f60;border-radius:2.5px"></div>
<div style="left:780.3px;top:351.8px;width:59.5px;height:15px;background:linear-gradient(to bottom,#888989,#747576);border-radius:2px"></div>
<span class="t" style="left:796px;top:354px;font-size:9.5px;line-height:11.5px;color:#f2f2f2;transform:scaleX(0.895);">通常</span>
<svg style="left:830.5px;top:357px;" width="8.5" height="5.5" viewBox="0 0 8.5 5.5"><path d="M0.3 0.3H8.2L4.25 5Z" fill="#39393a"/></svg>
<div style="left:844px;top:354.3px;width:27.5px;height:6.3px;background:#fbfbfb;box-shadow:0 0 0 0.6px #4a4a4b"></div>
<svg style="left:844px;top:354.3px;" width="27.5" height="6.3" viewBox="0 0 27.5 6.3"><g fill="#c4c4c4"><rect x="0" y="3.1" width="3.4" height="3.2"/><rect x="3.4" y="0" width="3.4" height="3.1"/><rect x="6.8" y="3.1" width="3.4" height="3.2"/><rect x="10.2" y="0" width="3.4" height="3.1"/><rect x="13.6" y="3.1" width="3.4" height="3.2"/><rect x="17" y="0" width="3.4" height="3.1"/><rect x="20.4" y="3.1" width="3.4" height="3.2"/><rect x="23.8" y="0" width="3.7" height="3.1"/></g></svg>
<div style="left:871.3px;top:351px;width:1.8px;height:14.5px;background:#606061;"></div>
<span class="t" style="left:879.5px;top:352px;font-size:9px;line-height:11px;color:#f0f0f0;transform:scaleX(0.767);">100</span>
<svg style="left:894px;top:353px;" width="7" height="10.5" viewBox="0 0 7 10.5"><path d="M0 4L3.5 0L7 4Z" fill="#2e2e2e"/><path d="M0 6.5L3.5 10.5L7 6.5Z" fill="#2e2e2e"/></svg>
<svg style="left:804px;top:371.5px;" width="12" height="10" viewBox="0 0 12 10"><ellipse cx="6" cy="5" rx="5.4" ry="4.2" fill="#6c6c6d" stroke="#2a2a2a" stroke-width="0.8"/><ellipse cx="6" cy="4" rx="4.6" ry="2.2" fill="#0c0c0c"/><path d="M1.4 3.2C3 1.4 9 1.4 10.6 3.2" stroke="#a8a8a8" stroke-width="0.8" fill="none"/></svg>
<svg style="left:825px;top:370.5px;" width="10" height="13" viewBox="0 0 10 13"><path d="M3.6 4.5H6.4L7.2 12.5H2.8Z" fill="#e6e6e6" stroke="#222" stroke-width="0.8"/><rect x="3.4" y="2" width="3.2" height="2.5" fill="#222"/><path d="M5 0.5V2M1 2.5L3 3.2M9 2.5L7 3.2" stroke="#ddd" stroke-width="0.8"/><path d="M3.2 8H6.8" stroke="#222" stroke-width="0.8"/></svg>
<svg style="left:842.5px;top:370.5px;" width="11" height="13" viewBox="0 0 11 13"><path d="M3 6V4C3 0.8 8 0.8 8 4V6" fill="none" stroke="#1a1a1a" stroke-width="1.5"/><rect x="1" y="5.6" width="9" height="7" rx="0.8" fill="#9c9c9c" stroke="#1a1a1a" stroke-width="1"/><rect x="4.7" y="7.8" width="1.6" height="2.6" fill="#1a1a1a"/></svg>
<svg style="left:861.5px;top:370.5px;" width="14" height="13" viewBox="0 0 14 13"><path d="M2.6 4.6V3.4C2.6 1 6.4 1 6.4 3.4V4.6" fill="none" stroke="#1a1a1a" stroke-width="1.3"/><rect x="1" y="4.4" width="7" height="5" rx="0.6" fill="#f0f0f0" stroke="#1a1a1a" stroke-width="0.9"/><rect x="3.8" y="6" width="1.4" height="1.8" fill="#1a1a1a"/><rect x="8" y="7.5" width="5.5" height="5" fill="#dcdcdc"/><rect x="8" y="10" width="2.7" height="2.5" fill="#555"/><rect x="10.7" y="7.5" width="2.8" height="2.5" fill="#777"/></svg>
<div style="left:878.5px;top:369.5px;width:21.5px;height:15.5px;background:#6f7071;border-radius:2px"></div>
<div style="left:879.3px;top:370.3px;width:20px;height:14px;background:#8a8b8c;border-radius:1.5px"></div>
<svg style="left:881px;top:371.5px;" width="18" height="12" viewBox="0 0 18 12"><rect x="0.5" y="0.5" width="9" height="9" fill="#838485" stroke="#7a7b7c" stroke-width="0.6"/><path d="M3 6L5.5 3.5L7 5.5L8.5 4.5L10 7.5H2Z" fill="#9a9b9c"/><path d="M8 2L9 5L12 5.4L9.8 7.4L10.5 10.5L8 9L5.5 10.5L6.2 7.4L4 5.4L7 5Z" fill="#777879"/><path d="M11.5 3.5H16.5L14 6.5Z" fill="#68696a"/></svg>
<div style="left:782px;top:387.5px;width:118px;height:1px;background:#6e6f70;"></div>
<svg style="left:788.5px;top:390px;" width="12" height="13" viewBox="0 0 12 13"><path d="M1 1H10.5V8.5L7.5 12H1Z" fill="#f6f6f6" stroke="#2a2a2a" stroke-width="1"/><path d="M10.5 8.5H7.5V12" fill="#bcbcbc" stroke="#2a2a2a" stroke-width="0.8"/></svg>
<svg style="left:807px;top:390.5px;" width="14" height="12" viewBox="0 0 14 12"><rect x="0.8" y="0.8" width="8.4" height="9" fill="#a6a6a6" stroke="#2a2a2a" stroke-width="0.9"/><path d="M4.5 0.8V9.8" stroke="#888" stroke-width="2.5"/><rect x="7" y="4.5" width="6" height="6.5" fill="#f6f6f6" stroke="#2a2a2a" stroke-width="0.9"/></svg>
<svg style="left:828.5px;top:390.5px;" width="11" height="12" viewBox="0 0 11 12"><path d="M5.5 1V7M3 5L5.5 8L8 5" stroke="#67686a" stroke-width="1.6" fill="none"/><path d="M0.8 8L5.5 6L10.2 8L5.5 10.5Z" fill="#6b6c6e"/></svg>
<svg style="left:847.5px;top:390.5px;" width="12" height="12" viewBox="0 0 12 12"><circle cx="6" cy="5" r="4.4" fill="#1a1a1a"/><path d="M6 2V7M3.8 5L6 7.6L8.2 5" stroke="#f0f0f0" stroke-width="1.3" fill="none"/><path d="M0.6 8.6L6 6.8L11.4 8.6L6 11.5Z" fill="#f4f4f4" stroke="#1a1a1a" stroke-width="0.8"/></svg>
<svg style="left:867px;top:391.5px;" width="12" height="9" viewBox="0 0 12 9"><rect x="0.4" y="0.4" width="11.2" height="8.2" fill="#1e1e1e" stroke="#3a3a3a" stroke-width="0.8"/><rect x="0.4" y="0.4" width="3" height="8.2" fill="#9a9a9a"/><circle cx="6.5" cy="4.5" r="2.4" fill="#f2f2f2"/></svg>
<svg style="left:886.5px;top:389.5px;" width="12" height="13" viewBox="0 0 12 13"><ellipse cx="6" cy="3.2" rx="5" ry="2.2" fill="#d8d8d8" stroke="#2a2a2a" stroke-width="1"/><path d="M1.6 4.4L2.8 12H9.2L10.4 4.4" fill="#efefef" stroke="#2a2a2a" stroke-width="1"/><path d="M2.2 7.2H9.8" stroke="#555" stroke-width="0.8"/></svg>
<div style="left:779.5px;top:405.5px;width:115px;height:131px;background:#5e5f60;"></div>
<div style="left:781px;top:406.5px;width:112.5px;height:129px;background:#7e7f81;"></div>
<div style="left:895px;top:406px;width:6.5px;height:129.5px;background:#767778;box-shadow:0 0 0 0.6px #8a8b8c"></div>
<div style="left:781px;top:407px;width:112.5px;height:27.8px;background:#7e7f81;"></div>
<div style="left:816px;top:407px;width:77.5px;height:27.8px;background:linear-gradient(to right,#7f9caf,#7291a4);"></div>
<div style="left:816px;top:407px;width:2px;height:27.8px;background:#a4c2d4;"></div>
<div style="left:781px;top:434.8px;width:112.5px;height:1px;background:#58595a;"></div>
<div style="left:781px;top:463.6px;width:112.5px;height:1px;background:#58595a;"></div>
<div style="left:799.3px;top:407px;width:1px;height:56.6px;background:#606162;"></div>
<div style="left:815.3px;top:407px;width:1px;height:56.6px;background:#606162;"></div>
<svg style="left:784.5px;top:417.5px;" width="10" height="7" viewBox="0 0 10 7"><path d="M0.5 3.5C2.5 0.3 7.5 0.3 9.5 3.5C7.5 6.7 2.5 6.7 0.5 3.5Z" fill="#e4e4e4" stroke="#222" stroke-width="0.9"/><circle cx="5" cy="3.4" r="2.1" fill="#151515"/><circle cx="4.3" cy="2.7" r="0.6" fill="#bbb"/></svg>
<svg style="left:784.5px;top:445.5px;" width="10" height="7" viewBox="0 0 10 7"><path d="M0.5 3.5C2.5 0.3 7.5 0.3 9.5 3.5C7.5 6.7 2.5 6.7 0.5 3.5Z" fill="#e4e4e4" stroke="#222" stroke-width="0.9"/><circle cx="5" cy="3.4" r="2.1" fill="#151515"/><circle cx="4.3" cy="2.7" r="0.6" fill="#bbb"/></svg>
<svg style="left:802.5px;top:417px;" width="11" height="10" viewBox="0 0 11 10"><path d="M0.8 9.2C3 8.8 5.5 6.5 8 3" fill="none" stroke="#1c1c1c" stroke-width="1.1"/><path d="M6.6 3.4L9.4 0.6L10.4 1.6L8 4.8Z" fill="#1c1c1c"/><path d="M0.8 9.2L3 7.5" stroke="#eee" stroke-width="0.7"/></svg>
<div style="left:820.5px;top:408.8px;width:18px;height:24.2px;background:#2e2e2f;border-radius:1px"></div>
<div style="left:822px;top:410.3px;width:15px;height:21.2px;background:#ffffff;"></div>
<svg style="left:822px;top:410.3px;" width="15" height="21.2" viewBox="0 0 15 21.2"><defs><pattern id="ck" width="5" height="5" patternUnits="userSpaceOnUse"><rect width="2.5" height="2.5" fill="#d2d2d2"/><rect x="2.5" y="2.5" width="2.5" height="2.5" fill="#d2d2d2"/></pattern></defs><rect width="15" height="21.2" fill="url(#ck)"/></svg>
<span class="t" style="left:842px;top:408px;font-size:9px;line-height:11px;color:#e8f0f4;transform:scaleX(0.891);">100 % 通常</span>
<span class="t" style="left:842px;top:420.5px;font-size:9.5px;line-height:11.5px;color:#e8f0f4;transform:scaleX(0.739);">レイヤー 1</span>
<div style="left:820.5px;top:438.3px;width:17.8px;height:23.4px;background:#2e2e2f;border-radius:1px"></div>
<div style="left:821.5px;top:439.3px;width:15.8px;height:21.4px;background:#ffffff;"></div>
<svg style="left:842.5px;top:437.5px;" width="14.5" height="13.5" viewBox="0 0 14.5 13.5"><rect x="0.7" y="0.7" width="13" height="12.2" rx="1.6" fill="#8a8b8c" stroke="#222" stroke-width="1.2"/><path d="M4 2.5H8.5L10.5 4.5V11H4Z" fill="#fafafa" stroke="#222" stroke-width="0.8"/><path d="M8.5 2.5V4.5H10.5" fill="#ccc" stroke="#222" stroke-width="0.7"/></svg>
<span class="t" style="left:842px;top:450.5px;font-size:9px;line-height:11px;color:#f2f2f2;transform:scaleX(0.889);">用紙</span>
<div style="left:904.5px;top:49px;width:24px;height:488px;background:linear-gradient(to right,#58585a,#6b6b6c);"></div>
<div style="left:905px;top:50px;width:23px;height:51.5px;background:#7a7a7b;box-shadow:0 0 0 0.6px #868687"></div>
<svg style="left:909.5px;top:56.5px;" width="14" height="14" viewBox="0 0 14 14"><defs><linearGradient id="qa" x1="0" y1="0" x2="0" y2="1"><stop offset="0" stop-color="#a8a8a8"/><stop offset="1" stop-color="#c8c8c8"/></linearGradient></defs><path d="M0.8 7H3.5V10H10.5V7H13.2V13.2H0.8Z" fill="url(#qa)" stroke="#8a8a8a" stroke-width="0.5"/><path d="M7 1L11.5 5.2H9V9H5V5.2H2.5Z" fill="#9e9e9e"/></svg>
<svg style="left:909px;top:80px;" width="15" height="17" viewBox="0 0 15 17"><rect x="0.5" y="0.5" width="14" height="15.5" rx="6" fill="#5c5c5d"/><circle cx="6.6" cy="4.6" r="1.7" fill="#b4b4b4"/><rect x="5.2" y="7.4" width="3" height="5.6" fill="#b4b4b4"/><circle cx="9" cy="11" r="1.8" fill="none" stroke="#c4c4c4" stroke-width="0.8"/><path d="M10.2 12.4L11.8 14" stroke="#c4c4c4" stroke-width="0.9"/></svg>
<div style="left:904.5px;top:102px;width:24px;height:3.5px;background:#58585a;"></div>
<div style="left:905px;top:106px;width:23px;height:3px;background:#7a7a7b;border-radius:1px 1px 0 0"></div>
<div style="left:905px;top:110px;width:23px;height:19px;background:#7a7a7b;"></div>
<svg style="left:908px;top:111.5px;" width="18" height="16" viewBox="0 0 18 16"><rect x="5.5" y="5" width="11.5" height="9.5" fill="#f4f4f4" stroke="#c8c8c8" stroke-width="0.7"/><rect x="1" y="1" width="11.5" height="9" rx="1.2" fill="#fdfdfd" stroke="#d01820" stroke-width="1.9"/></svg>
<div style="left:905px;top:130px;width:23px;height:3.5px;background:#616162;"></div>
<div style="left:905px;top:135px;width:23px;height:19.5px;background:#7a7a7b;"></div>
<svg style="left:908.5px;top:136px;" width="17" height="18" viewBox="0 0 17 18"><rect x="0.5" y="12" width="16" height="3.5" fill="#0c0c0c"/><rect x="0.5" y="15.5" width="16" height="1.5" fill="#ececec"/><path d="M3 8L7 12.5C8.5 7 12 3 16.5 0.8" fill="none" stroke="#d01820" stroke-width="1.9"/></svg>
<div style="left:905px;top:155.3px;width:23px;height:3.5px;background:#616162;"></div>
<div style="left:905px;top:160px;width:23px;height:21px;background:#7a7a7b;"></div>
<svg style="left:908.5px;top:162.5px;" width="17" height="16" viewBox="0 0 17 16"><g fill="none" stroke-width="1"><path d="M1 3.4L8.5 0.8L16 3.4L8.5 6Z" fill="#5a5a5a" stroke="#2a2a2a"/><path d="M1 6.8L8.5 4.2L16 6.8L8.5 9.4Z" fill="#8e8e8e" stroke="#f0f0f0"/><path d="M1 10.2L8.5 7.6L16 10.2L8.5 12.8Z" fill="#5a5a5a" stroke="#2a2a2a"/><path d="M1 13L8.5 10.4L16 13L8.5 15.6Z" fill="#fafafa" stroke="#f0f0f0"/></g></svg>
<div style="left:905px;top:181.6px;width:23px;height:3px;background:#616162;"></div>
<div style="left:904.5px;top:185px;width:24px;height:2.5px;background:#555556;"></div>
<div style="left:905px;top:188px;width:23px;height:26px;background:#7a7a7b;"></div>
<svg style="left:909.5px;top:193.5px;" width="15" height="14" viewBox="0 0 15 14"><defs><linearGradient id="cl" x1="0" y1="0" x2="1" y2="1"><stop offset="0" stop-color="#6a6a6b"/><stop offset="1" stop-color="#48484a"/></linearGradient></defs><rect x="1" y="5.5" width="13" height="8" fill="url(#cl)"/><path d="M0.6 3.4L13.4 0.4L14 3L1.2 6Z" fill="#4a4a4b"/><path d="M2.5 3L4.5 5.2M5.8 2.2L7.8 4.4M9 1.4L11 3.6M12.2 0.8L13.8 2.6" stroke="#b8b8b8" stroke-width="1.3"/></svg>
<div style="left:904.5px;top:214.3px;width:24px;height:2.7px;background:#555556;"></div>
<div style="left:905px;top:217.5px;width:23px;height:27.5px;background:#7a7a7b;box-shadow:0 0 0 0.6px #868687"></div>
<svg style="left:907px;top:223.5px;" width="19" height="17" viewBox="0 0 19 17"><path d="M0.8 11.5V1.5H5.5L7 3.2H11.5V6" fill="#8a8a8b" stroke="#98989a" stroke-width="1"/><rect x="7.5" y="6.5" width="10.5" height="9.5" fill="#949495" stroke="#a2a2a3" stroke-width="0.6"/><path d="M14.5 6V11M12.2 9L14.5 12L16.8 9" stroke="#4a4a4b" stroke-width="1.5" fill="none"/></svg>
<div style="left:929.5px;top:48px;width:1.8px;height:489px;background:#68686a;"></div>
<div style="left:931px;top:49px;width:28px;height:488px;background:#6c6c6d;"></div>
<div style="left:931px;top:50px;width:28px;height:14px;background:linear-gradient(to bottom,#4f4f50,#5f5f60);"></div>
<div style="left:931.5px;top:51px;width:14.5px;height:12px;background:#656566;"></div>
<svg style="left:935px;top:54.5px;" width="8" height="7" viewBox="0 0 8 7"><path d="M0.5 0.5L2.8 3L0.5 5.5Z" fill="#949495"/><path d="M3.6 0.8H7.2M3.6 3H7.2M3.6 5.2H7.2" stroke="#8e8e8f" stroke-width="0.9"/></svg>
<div style="left:947px;top:54px;width:12px;height:11px;background:linear-gradient(to bottom,#8b8b8c,#808081);"></div>
<svg style="left:952.3px;top:51px;" width="8" height="15" viewBox="0 0 8 15"><path d="M4 1L6 7L5 12.5H3L2 7Z" fill="#efefef" stroke="#1c1c1c" stroke-width="0.9"/><path d="M4 7V12" stroke="#1c1c1c" stroke-width="0.7"/><rect x="1.5" y="13" width="5" height="1.6" fill="#111"/></svg>
<div style="left:931.5px;top:67.5px;width:27px;height:252px;background:#808183;box-shadow:0 0 0 0.6px #8c8d8f"></div>
<div style="left:931.5px;top:320px;width:27px;height:1.6px;background:#58585a;"></div>
<div style="left:931.5px;top:322px;width:27px;height:124.5px;background:#808183;box-shadow:0 0 0 0.6px #8c8d8f"></div>
<div style="left:931.5px;top:447px;width:27px;height:1.6px;background:#58585a;"></div>
<div style="left:931.5px;top:449px;width:27px;height:43px;background:#808183;box-shadow:0 0 0 0.6px #8c8d8f"></div>
<div style="left:931.5px;top:492.5px;width:27px;height:44.5px;background:#808183;"></div>
<div style="left:935.8px;top:87.5px;width:19.4px;height:19.3px;background:#8fb0c4;border-radius:1.5px"></div>
<div style="left:936.8px;top:88.5px;width:17.4px;height:17.3px;background:#7896a8;border-radius:1px"></div>
<svg style="left:938.5px;top:70.5px;" width="14" height="15" viewBox="0 0 14 15"><g transform="rotate(14 7 7)"><path d="M3 1.5H12L10.5 8H1.5Z" fill="#cfcfcf" stroke="#555" stroke-width="0.6"/><path d="M1.5 8H10.5L10 12.5H1Z" fill="#fbfbfb" stroke="#666" stroke-width="0.6"/><path d="M10.5 8L12 1.5L12.6 6.5L10 12.5Z" fill="#3a3a3a"/></g></svg>
<svg style="left:939.3px;top:89.3px;" width="12" height="16" viewBox="0 0 12 16"><path d="M2.6 5.2L5.6 3.6L8.6 9.4L10.4 14.8L6.6 11Z" fill="#f6f6f6" stroke="#1c1c1c" stroke-width="0.9" stroke-linejoin="round"/><path d="M6.4 8L10 14.2" stroke="#1c1c1c" stroke-width="0.9"/><circle cx="3.4" cy="3.2" r="2.5" fill="#a2a2a2" stroke="#4a4a4a" stroke-width="0.7"/><circle cx="2.8" cy="2.6" r="1" fill="#c8c8c8"/></svg>
<svg style="left:939.3px;top:110.6px;" width="12" height="16" viewBox="0 0 12 16"><path d="M2.6 5.2L5.6 3.6L8.6 9.4L10.4 14.8L6.6 11Z" fill="#f6f6f6" stroke="#1c1c1c" stroke-width="0.9" stroke-linejoin="round"/><path d="M6.4 8L10 14.2" stroke="#1c1c1c" stroke-width="0.9"/><circle cx="3.4" cy="3.2" r="2.5" fill="#a2a2a2" stroke="#4a4a4a" stroke-width="0.7"/><circle cx="2.8" cy="2.6" r="1" fill="#c8c8c8"/></svg>
<svg style="left:938.5px;top:131px;" width="15" height="15" viewBox="0 0 15 15"><path d="M6 9L13 1.5L14 2.5L7.5 10.5Z" fill="#ececec" stroke="#3a3a3a" stroke-width="0.8"/><ellipse cx="8" cy="12" rx="5.5" ry="2.2" fill="#f0a8a8"/><circle cx="4.5" cy="10.8" r="2.4" fill="#f4f4f4" stroke="#888" stroke-width="0.5"/></svg>
<svg style="left:939px;top:151.5px;" width="13" height="15" viewBox="0 0 13 15"><path d="M4.5 1L5.8 12.5" stroke="#1c1c1c" stroke-width="1.6"/><path d="M5 1.5L5.6 10" stroke="#e8e8e8" stroke-width="0.7"/><path d="M6 4L11.5 11.5L6.5 10Z" fill="#2a2a2a"/><path d="M1 14L10 11" stroke="#2a2a2a" stroke-width="0.8"/><path d="M1.5 1.5L4 2.5" stroke="#2a2a2a" stroke-width="0.9"/></svg>
<svg style="left:938.5px;top:173px;" width="15" height="13" viewBox="0 0 15 13"><path d="M1 7L6 1.5L9 4L10 1.2L13.5 4.5L13.8 9.5L11 11.8L2.5 12Z" fill="#f8f8f8" stroke="#333" stroke-width="0.9"/><path d="M9 4.5L10 1.5L12 4L11.5 7.5Z" fill="#555"/><rect x="4" y="8" width="2" height="2.5" fill="#888"/></svg>
<svg style="left:940px;top:192.5px;" width="11" height="15" viewBox="0 0 11 15"><path d="M1 14.5L2 11L7 4L9 5.5L4 12.5Z" fill="#2a2a2a"/><path d="M6 2.5L10 5.5M7.5 3L9.5 0.8" stroke="#2a2a2a" stroke-width="1.8"/><path d="M3 11L7 5.5" stroke="#d8d8d8" stroke-width="0.8"/></svg>
<svg style="left:938.5px;top:213px;" width="15" height="15" viewBox="0 0 15 15"><path d="M5.5 5L12.5 7.5L10 13.5L3 11Z" fill="#f4f4f4" stroke="#1a1a1a" stroke-width="0.9"/><path d="M5.5 5C3 6.5 1.6 9 0.8 11.5" stroke="#1a1a1a" stroke-width="2" fill="none"/><path d="M7 6L10.5 1.5L12.5 2.6L9.5 7" fill="#d4d4d4" stroke="#1a1a1a" stroke-width="0.9"/><path d="M8 10L12 8.5L10 13Z" fill="#999"/></svg>
<svg style="left:940px;top:235px;" width="11" height="12" viewBox="0 0 11 12"><defs><linearGradient id="gr" x1="0" y1="0" x2="1" y2="1"><stop offset="0" stop-color="#fafafa"/><stop offset="0.55" stop-color="#222"/><stop offset="1" stop-color="#000"/></linearGradient></defs><rect x="0.3" y="0.3" width="10.4" height="11.4" fill="url(#gr)" stroke="#222" stroke-width="0.6"/></svg>
<svg style="left:938.5px;top:254px;" width="15" height="15" viewBox="0 0 15 15"><path d="M6 6L13.5 0.8M6 6L14 9.5" stroke="#444" stroke-width="0.8"/><path d="M7 5L13 2V8.5Z" fill="#a8a8a8"/><rect x="4" y="3" width="2.6" height="3.4" fill="#ddd" stroke="#333" stroke-width="0.6"/><ellipse cx="5.3" cy="9" rx="4.4" ry="2.2" fill="#f4f4f4" stroke="#333" stroke-width="0.7"/><rect x="0.9" y="9" width="8.8" height="3.6" fill="#f8f8f8"/><ellipse cx="5.3" cy="12.6" rx="4.4" ry="1.6" fill="#fbfbfb" stroke="#555" stroke-width="0.6"/><path d="M0.9 10.6H9.7" stroke="#444" stroke-width="0.9"/></svg>
<svg style="left:939.5px;top:275.5px;" width="13" height="13" viewBox="0 0 13 13"><defs><linearGradient id="ct" x1="0" y1="0" x2="1" y2="0"><stop offset="0" stop-color="#3a3a3a"/><stop offset="1" stop-color="#b8b8b8"/></linearGradient></defs><path d="M0.8 11.5C2 5 6 1.5 11.5 0.8V8C7 8.5 3.5 9.5 0.8 11.5Z" fill="url(#ct)"/><path d="M0.8 11.8C4 9.8 8 9 11.8 8.8" stroke="#e4e4e4" stroke-width="1" fill="none"/></svg>
<svg style="left:938.5px;top:295px;" width="16" height="13" viewBox="0 0 16 13"><defs><linearGradient id="dr" x1="0" y1="0" x2="1" y2="0"><stop offset="0" stop-color="#111"/><stop offset="1" stop-color="#aaa"/></linearGradient></defs><path d="M5 0.8C6.5 4 8.8 6 8.8 8.5C8.8 13 1.2 13 1.2 8.5C1.2 6 3.5 4 5 0.8Z" fill="url(#dr)"/><path d="M10.5 0.8C12 4 14.8 6 14.8 8.5C14.8 13 6.6 13 6.6 8.5C6.6 6 9 4 10.5 0.8Z" fill="#fbfbfb" stroke="#555" stroke-width="0.5"/></svg>
<svg style="left:937.5px;top:325px;" width="17" height="12" viewBox="0 0 17 12"><ellipse cx="8.5" cy="5" rx="7.3" ry="4" fill="none" stroke="#2c2c2c" stroke-width="1.1" transform="rotate(-10 8.5 5)"/><path d="M3.5 8L1.8 10.8L5 9" fill="none" stroke="#2c2c2c" stroke-width="1"/></svg>
<svg style="left:938.5px;top:344.5px;" width="15" height="15" viewBox="0 0 15 15"><path d="M6 0.5L7 4.2L10 2L8 5L11.5 6L8 7L10 10L7 8L6 11.5L5 8L2 10L4 7L0.5 6L4 5L2 2L5 4.2Z" fill="#2a2a2a"/><circle cx="6" cy="6" r="2.1" fill="#f8f8f8"/><path d="M8.5 8.5L13.5 13.5" stroke="#d8d8d8" stroke-width="1.6"/><path d="M9 9.5L13 13.8" stroke="#444" stroke-width="0.6"/></svg>
<svg style="left:937.5px;top:364.5px;" width="16" height="16" viewBox="0 0 16 16"><path d="M1 1L8 4L5 5L4.2 8Z" fill="#1c1c1c"/><path d="M9 5V15M4 10H14.5" stroke="#1c1c1c" stroke-width="1.2"/><path d="M9 15.5L7.3 13H10.7ZM15 10L12.5 8.3V11.7ZM9 4.5L7.5 6.5H10.5Z" fill="#1c1c1c"/><path d="M4 4L9 10" stroke="#1c1c1c" stroke-width="1.3"/></svg>
<svg style="left:938.5px;top:385.5px;" width="15" height="15" viewBox="0 0 15 15"><path d="M1 3L7 1L10.5 2.5V9L5 11L1 9.5Z" fill="#f4f4f4" stroke="#555" stroke-width="0.8"/><path d="M1 3L5 4.5L10.5 2.5M5 4.5V11" stroke="#888" stroke-width="0.7" fill="none"/><rect x="2" y="5.5" width="2" height="3" fill="#aaa"/><path d="M8.5 6.5L13.5 11.5L12 13L9.5 11Z" fill="#1c1c1c" stroke="#f0f0f0" stroke-width="0.7"/></svg>
<svg style="left:938.5px;top:406.5px;" width="14" height="14" viewBox="0 0 14 14"><path d="M4 13V10L0.8 6.5L1.8 5.8L4.2 7.6L3 1.8L4.2 1.5L5.8 6L6.2 0.6H7.4L7.8 6L9.4 1.4L10.6 1.8L9.6 6.8L12.2 4.2L13 5L10 10V13Z" fill="#fbfbfb" stroke="#666" stroke-width="0.4"/></svg>
<svg style="left:939.5px;top:425.5px;" width="14" height="15" viewBox="0 0 14 15"><circle cx="5" cy="5" r="4.2" fill="#f6f6f6" stroke="#222" stroke-width="1.1"/><circle cx="3.8" cy="5.6" r="0.9" fill="#222"/><path d="M8 8.2L12.5 13.5" stroke="#111" stroke-width="2"/></svg>
<svg style="left:940px;top:454.5px;" width="11" height="10" viewBox="0 0 11 10"><path d="M0.5 0.8H10.5V2L0.5 5Z" fill="#fbfbfb"/><path d="M0.5 9.2H10.5V4.6L0.5 7.6Z" fill="#fbfbfb"/></svg>
<div style="left:939.5px;top:475px;width:12px;height:12px;border-radius:50%;background:radial-gradient(circle,#454546 55%,rgba(70,70,71,0) 100%)"></div>
<div style="left:942px;top:503.5px;width:16.3px;height:16.5px;background:#b4b400;border-radius:1px"></div>
<div style="left:943px;top:504.5px;width:14.3px;height:14.5px;background:#ffff00;"></div>
<div style="left:932.3px;top:493.5px;width:16.8px;height:16.7px;background:#a6cae2;border-radius:1px"></div>
<div style="left:933.6px;top:494.8px;width:14.2px;height:14.1px;background:#262627;"></div>
<div style="left:934.8px;top:496px;width:11.8px;height:11.7px;background:#f2141c;"></div>
<div style="left:932.5px;top:521px;width:26px;height:7.5px;background:#ffffff;box-shadow:0 0 0 0.6px #555"></div>
<svg style="left:932.5px;top:521px;" width="26" height="7.5" viewBox="0 0 26 7.5"><g fill="#8c8c8c"><rect x="0" y="3.8" width="3.3" height="3.7"/><rect x="3.3" y="0" width="3.2" height="3.8"/><rect x="6.5" y="3.8" width="3.3" height="3.7"/><rect x="9.8" y="0" width="3.2" height="3.8"/><rect x="13" y="3.8" width="3.3" height="3.7"/><rect x="16.3" y="0" width="3.2" height="3.8"/><rect x="19.5" y="3.8" width="3.3" height="3.7"/><rect x="22.8" y="0" width="3.2" height="3.8"/></g></svg>
<div style="left:0px;top:0px;width:2px;height:540px;background:#0c0c0c;"></div>
<div style="left:959px;top:0px;width:1px;height:540px;background:#0c0c0c;"></div>
<div style="left:0px;top:537px;width:960px;height:1px;background:#4a4a4b;"></div>
<div style="left:0px;top:538px;width:960px;height:2px;background:#b9b9bd;"></div>
<div style="left:0px;top:538px;width:212px;height:2px;background:#a9b3ca;"></div>
<div style="left:213px;top:538px;width:114px;height:2px;background:#26262a;"></div>
<div style="left:779px;top:538px;width:126px;height:2px;background:#a9b3ca;"></div>
<div style="left:905px;top:538px;width:25px;height:2px;background:#555556;"></div></div></body></html>
